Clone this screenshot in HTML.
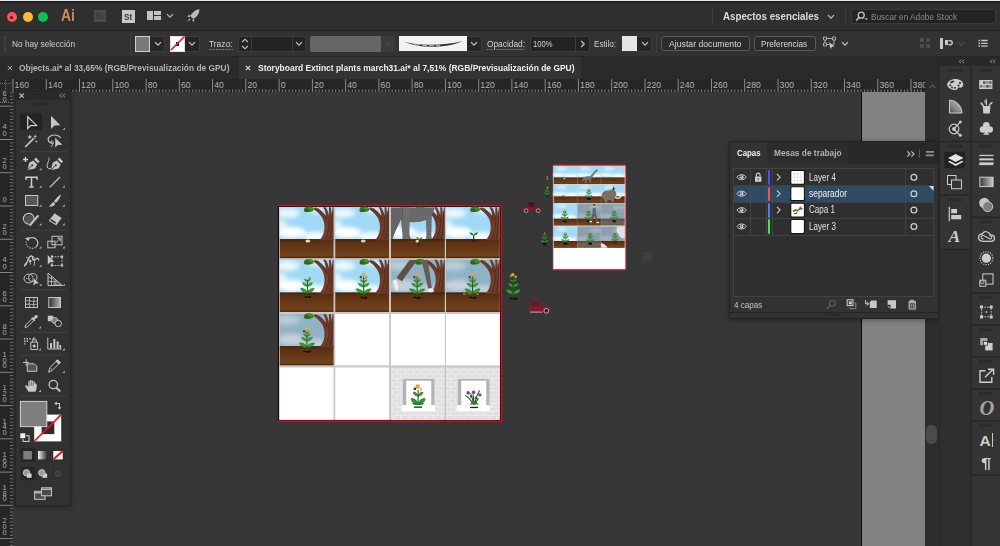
<!DOCTYPE html>
<html lang="es">
<head>
<meta charset="utf-8">
<title>Adobe Illustrator</title>
<style>
*{box-sizing:border-box;margin:0;padding:0}
html,body{width:1000px;height:546px;overflow:hidden;background:#373737}
body{position:relative;font-family:"Liberation Sans","DejaVu Sans",sans-serif;font-size:10px;color:#d6d6d6;-webkit-font-smoothing:antialiased}
.a{position:absolute}
.t{position:absolute;white-space:nowrap;line-height:1;transform-origin:0 0}
svg{position:absolute;overflow:visible}
/* ---------- top bars ---------- */
#topline{left:0;top:0;width:1000px;height:1px;background:#e4e4ec}
#topdark{left:0;top:1px;width:1000px;height:2px;background:#1f1f1f}
#titlebar{left:0;top:3px;width:1000px;height:27px;background:#2f2f2f}
#tsep{left:0;top:30px;width:1000px;height:1px;background:#232323}
#ctrlbar{left:0;top:31px;width:1000px;height:26px;background:#323232}
#csep{left:0;top:56px;width:1000px;height:1px;background:#262626}
#tabbar{left:0;top:57px;width:1000px;height:22px;background:#2a2a2a}
#tab2{left:239px;top:57px;width:342px;height:22px;background:#333333}
#hruler{left:0;top:79px;width:925px;height:13px;background:#262626}
#vruler{left:0;top:92px;width:13px;height:454px;background:#262626}
.dd{position:absolute;background:#262626;border:1px solid #3d3d3d;border-radius:2px}
.btn{position:absolute;border:1px solid #5a5a5a;border-radius:3px;background:#2b2b2b}
/* ---------- tools ---------- */
#tools{left:15px;top:90px;width:56px;height:416px;background:#313131;border:1px solid #262626;box-shadow:0 1px 5px rgba(0,0,0,.4)}
#toolshead{left:16px;top:91px;width:54px;height:9px;background:#292929}
.tsep{position:absolute;left:20px;width:46px;height:1px;background:#444}
/* ---------- right ---------- */
#grayrect{left:862px;top:92px;width:63px;height:454px;background:#828282}
#grayline{left:861px;top:92px;width:1px;height:454px;background:#0a0a0a}
#vscroll{left:925px;top:92px;width:14px;height:454px;background:#2d2d2d}
#dockbg{left:939px;top:57px;width:61px;height:489px;background:#292929}
#dock1{left:940px;top:66px;width:29.500px;height:183.500px;background:#343434}
#dock1b{left:940px;top:250px;width:29.500px;height:296px;background:#2f2f2f}
#dock2{left:971.500px;top:66px;width:28.500px;height:480px;background:#343434}
.dsep{position:absolute;height:1px;background:#2a2a2a}
/* ---------- layers ---------- */
#layers{left:729px;top:141px;width:210px;height:178px;background:#323232;border:1px solid #232323;box-shadow:0 1px 5px rgba(0,0,0,.4)}
#lhead{left:730px;top:142px;width:208px;height:22px;background:#282828}
#ltab{left:730px;top:142px;width:37px;height:23px;background:#323232}
#llist{left:733px;top:168px;width:201px;height:129px;background:#2f2f2f;border:1px solid #414141}
.lrow{position:absolute;left:734px;width:199px;height:16px;border-bottom:1px solid #3c3c3c}
</style>
</head>
<body>
<!-- base bars -->
<div class="a" id="titlebar"></div>
<div class="a" id="topline"></div>
<div class="a" id="topdark"></div>
<div class="a" id="tsep"></div>
<div class="a" id="ctrlbar"></div>
<div class="a" id="csep"></div>
<div class="a" id="tabbar"></div>
<div class="a" id="tab2"></div>
<div class="a" id="hruler"></div>
<div class="a" id="vruler"></div>
<!-- title bar -->
<div class="a" style="left:6.5px;top:12px;width:10px;height:10px;border-radius:50%;background:#f5565a"></div>
<div class="a" style="left:10px;top:15.5px;width:3px;height:3px;border-radius:50%;background:#5a1010"></div>
<div class="a" style="left:22.5px;top:12px;width:10px;height:10px;border-radius:50%;background:#fbb93e"></div>
<div class="a" style="left:38px;top:12px;width:10px;height:10px;border-radius:50%;background:#09c455"></div>
<div class="t" id="ailogo" style="left:61px;top:7px;font-size:17px;font-weight:bold;color:#c98a63;transform:scaleX(.82)">Ai</div>
<div class="a" style="left:94px;top:10px;width:12px;height:12px;background:#4a4a4a"></div>
<div class="t" style="left:95.5px;top:12px;font-size:9px;font-weight:bold;color:#383838;transform:scaleX(.85)">Br</div>
<div class="a" style="left:122px;top:10px;width:13px;height:13px;background:#c9c9c9"></div>
<div class="t" style="left:124px;top:12px;font-size:9.5px;font-weight:bold;color:#333;transform:scaleX(.85)">St</div>
<div class="a" style="left:147px;top:11px;width:6px;height:9px;background:#c2c2c2"></div>
<div class="a" style="left:154px;top:11px;width:7px;height:4px;background:#c2c2c2"></div>
<div class="a" style="left:154px;top:16px;width:7px;height:4px;background:#c2c2c2"></div>
<svg style="left:166px;top:13px" width="8" height="6" viewBox="0 0 8 6"><path d="M1 1.2 L4 4.2 L7 1.2" fill="none" stroke="#b8b8b8" stroke-width="1.2"/></svg>
<svg style="left:185px;top:8px" width="16" height="16" viewBox="0 0 16 16"><path d="M14.5 1.2 C10.5 1.6 7.2 4.2 5.4 8.2 L8.2 10.8 C12 9 14.3 5.6 14.5 1.2 Z" fill="#bdbdbd"/><path d="M5.6 6.6 L2 8.2 L4.6 9.2 Z M9.6 10.6 L8.4 14.2 L7.2 11.8 Z" fill="#bdbdbd"/><path d="M4.6 10.4 L2.2 13.6 L5.8 11.6 Z" fill="#bdbdbd"/></svg>
<div class="a" style="left:712px;top:8px;width:1px;height:17px;background:#3e3e3e"></div>
<div class="t" id="aspectos" style="left:723px;top:11.600px;font-size:10.2px;font-weight:bold;color:#dcdcdc;transform:scaleX(0.958)">Aspectos esenciales</div>
<svg style="left:827px;top:14px" width="8" height="6" viewBox="0 0 8 6"><path d="M1 1.2 L4 4.2 L7 1.2" fill="none" stroke="#c4c4c4" stroke-width="1.2"/></svg>
<div class="a" style="left:845px;top:8px;width:1px;height:17px;background:#3e3e3e"></div>
<div class="a" style="left:851px;top:9px;width:145px;height:15px;background:#232323;border:1px solid #3a3a3a;border-radius:3px"></div>
<svg style="left:855px;top:11px" width="14" height="11" viewBox="0 0 14 11"><circle cx="6.2" cy="4.2" r="3" fill="none" stroke="#c8c8c8" stroke-width="1.3"/><path d="M4 6.6 L1.2 9.6" stroke="#c8c8c8" stroke-width="1.5"/><path d="M9.6 7.2 L12.8 7.2 L11.2 9 Z" fill="#c8c8c8"/></svg>
<div class="t" id="buscar" style="left:871px;top:11.5px;font-size:9.5px;color:#8a8a8a;transform:scaleX(0.871)">Buscar en Adobe Stock</div>
<!--/TITLE-->
<!-- control bar -->
<div class="a" style="left:4px;top:36px;width:2px;height:15px;background:repeating-linear-gradient(#4a4a4a 0 1px,transparent 1px 2px)"></div>
<div class="t" id="nohay" style="left:12px;top:39px;font-size:9.5px;color:#d2d2d2;transform:scaleX(0.871)">No hay selección</div>
<div class="a" style="left:129.5px;top:34px;width:1px;height:19px;background:#3f3f3f"></div>
<div class="dd" style="left:135px;top:36px;width:30px;height:16px"></div>
<div class="a" style="left:135px;top:36px;width:15px;height:15.5px;background:#7a7a7a;border:1px solid #cfcfcf"></div>
<svg style="left:153.5px;top:41px" width="8" height="6" viewBox="0 0 8 6"><path d="M1 1.2 L4 4.2 L7 1.2" fill="none" stroke="#c8c8c8" stroke-width="1.2"/></svg>
<div class="dd" style="left:169.5px;top:36px;width:30px;height:16px"></div>
<div class="a" style="left:169.5px;top:36px;width:15px;height:15.5px;background:#fff;border:1px solid #e0e0e0"></div>
<div class="a" style="left:175.5px;top:42px;width:3.5px;height:4px;background:#222"></div>
<svg style="left:169.5px;top:36px" width="15" height="15.5" viewBox="0 0 15 15.5"><path d="M1 14 L14.5 0.5" stroke="#f01020" stroke-width="1.6"/></svg>
<svg style="left:188px;top:41px" width="8" height="6" viewBox="0 0 8 6"><path d="M1 1.2 L4 4.2 L7 1.2" fill="none" stroke="#c8c8c8" stroke-width="1.2"/></svg>
<div class="t" id="trazo" style="left:209px;top:38.5px;font-size:9.5px;color:#d2d2d2;transform:scaleX(0.880);border-bottom:1px dotted #9a9a9a;padding-bottom:1px">Trazo:</div>
<div class="dd" style="left:238px;top:35.5px;width:68px;height:16px;background:#232323"></div>
<div class="a" style="left:251px;top:36px;width:1px;height:15px;background:#3d3d3d"></div>
<div class="a" style="left:291.5px;top:36px;width:1px;height:15px;background:#3d3d3d"></div>
<svg style="left:241px;top:37.5px" width="8" height="12" viewBox="0 0 8 12"><path d="M1.2 4 L4 1.2 L6.8 4 M1.2 8 L4 10.8 L6.8 8" fill="none" stroke="#c8c8c8" stroke-width="1.1"/></svg>
<svg style="left:294.5px;top:41px" width="8" height="6" viewBox="0 0 8 6"><path d="M1 1.2 L4 4.2 L7 1.2" fill="none" stroke="#c8c8c8" stroke-width="1.2"/></svg>
<div class="a" style="left:309.5px;top:35.5px;width:71px;height:16px;background:#666;border-radius:2px 0 0 2px"></div>
<div class="a" style="left:380.5px;top:35.5px;width:14px;height:16px;background:#3b3b3b;border-radius:0 2px 2px 0"></div>
<svg style="left:383.5px;top:41px" width="8" height="6" viewBox="0 0 8 6"><path d="M1 1.2 L4 4.2 L7 1.2" fill="none" stroke="#4c4c4c" stroke-width="1.2"/></svg>
<div class="dd" style="left:398.5px;top:35.5px;width:83px;height:16px"></div>
<div class="a" style="left:399px;top:36px;width:68px;height:15px;background:#f2f2f2"></div>
<svg style="left:399px;top:36px" width="68" height="15" viewBox="0 0 68 15"><path d="M4.500 5.600 C13 8.200 22 9 32 8.800 C44 8.600 54 7.600 63.500 5 C54.500 9.200 44 10.600 32 10.800 C22 10.800 12.500 9.200 4.500 5.600 Z" fill="#2e2e2e"/><path d="M15 8.900 H21 M23.500 9.600 H28 M30 9.800 H35 M37 9.700 H41" stroke="#d8d8d8" stroke-width=".9"/></svg>
<svg style="left:470px;top:41px" width="8" height="6" viewBox="0 0 8 6"><path d="M1 1.2 L4 4.2 L7 1.2" fill="none" stroke="#c8c8c8" stroke-width="1.2"/></svg>
<div class="t" id="opac" style="left:487px;top:38.5px;font-size:9.5px;color:#d2d2d2;transform:scaleX(0.877);border-bottom:1px dotted #9a9a9a;padding-bottom:1px">Opacidad:</div>
<div class="dd" style="left:529.5px;top:35.5px;width:60px;height:16px;background:#232323"></div>
<div class="a" style="left:575px;top:36px;width:1px;height:15px;background:#3d3d3d"></div>
<div class="t" id="pct" style="left:533px;top:39px;font-size:9.5px;color:#d2d2d2;transform:scaleX(0.802)">100%</div>
<svg style="left:579.5px;top:39.5px" width="6" height="8" viewBox="0 0 6 8"><path d="M1.2 1 L4.2 4 L1.2 7" fill="none" stroke="#c8c8c8" stroke-width="1.2"/></svg>
<div class="t" id="estilo" style="left:594px;top:39px;font-size:9.5px;color:#d2d2d2;transform:scaleX(0.850)">Estilo:</div>
<div class="dd" style="left:621.5px;top:35.5px;width:30px;height:16px"></div>
<div class="a" style="left:622px;top:36px;width:15px;height:15px;background:#e6e6e6"></div>
<svg style="left:640.5px;top:41px" width="8" height="6" viewBox="0 0 8 6"><path d="M1 1.2 L4 4.2 L7 1.2" fill="none" stroke="#c8c8c8" stroke-width="1.2"/></svg>
<div class="a" style="left:656px;top:34px;width:1px;height:19px;background:#3f3f3f"></div>
<div class="btn" style="left:661px;top:36px;width:89px;height:15px"></div>
<div class="t" id="ajustar" style="left:669px;top:39px;font-size:9.5px;color:#dadada;transform:scaleX(0.914)">Ajustar documento</div>
<div class="btn" style="left:754px;top:36px;width:62px;height:15px"></div>
<div class="t" id="pref" style="left:761px;top:39px;font-size:9.5px;color:#dadada;transform:scaleX(0.866)">Preferencias</div>
<svg style="left:822px;top:36px" width="16" height="15" viewBox="0 0 16 15"><path d="M3 2.500 H12 V8.500 H3 Z" fill="none" stroke="#b4b4b4" stroke-width="1"/><path d="M1.500 1 h3 v3 h-3 z M10.500 1 h3 v3 h-3 z M1.500 7 h3 v3 h-3 z" fill="#323232" stroke="#b4b4b4" stroke-width=".9"/><path d="M6.500 5.500 L13 10.800 L10 11 L8.600 13.800 Z" fill="#d0d0d0" stroke="#323232" stroke-width=".5"/></svg>
<svg style="left:841px;top:41px" width="8" height="6" viewBox="0 0 8 6"><path d="M1 1.2 L4 4.2 L7 1.2" fill="none" stroke="#c8c8c8" stroke-width="1.2"/></svg>
<svg style="left:919px;top:37px" width="12" height="12" viewBox="0 0 12 12"><path d="M1 1 h4 v4 h-4 z M7 1 h4 v4 h-4 z M1 7 h4 v4 h-4 z M7 7 h4 v4 h-4 z" fill="#4c4c4c"/></svg>
<svg style="left:939px;top:37px" width="16" height="13" viewBox="0 0 16 13"><path d="M1 1 h3 v11 h-3 z" fill="#c6c6c6"/><path d="M6 3 h3 v5 h-3 z" fill="#c6c6c6"/><path d="M9.5 3.8 H11.2 A2 2 0 0 1 11.2 7.8 H9.5" fill="none" stroke="#c6c6c6" stroke-width="1.4"/></svg>
<svg style="left:957px;top:41px" width="8" height="6" viewBox="0 0 8 6"><path d="M1 1.2 L4 4.2 L7 1.2" fill="none" stroke="#4e4e4e" stroke-width="1.2"/></svg>
<svg style="left:977.500px;top:39px" width="11" height="9" viewBox="0 0 11 9"><path d="M.5 1.500 h1.600 M.5 4.300 h1.600 M.5 7.100 h1.600" stroke="#c6c6c6" stroke-width="1.500"/><path d="M3.200 1.500 h6.400 M3.200 4.300 h6.400 M3.200 7.100 h6.400" stroke="#c6c6c6" stroke-width="1.300"/></svg>
<!--/CTRL-->
<!-- tabs -->
<svg style="left:6.5px;top:65px" width="6" height="6" viewBox="0 0 6 6"><path d="M.8 .8 L5.2 5.200 M5.2 .8 L.8 5.200" stroke="#a8a8a8" stroke-width="1"/></svg>
<div class="t" id="tab1t" style="left:19px;top:63.6px;font-size:9.3px;font-weight:bold;color:#b4b4b4;transform:scaleX(.901)">Objects.ai* al 33,65% (RGB/Previsualización de GPU)</div>
<svg style="left:245px;top:65px" width="6" height="6" viewBox="0 0 6 6"><path d="M.8 .8 L5.2 5.200 M5.2 .8 L.8 5.200" stroke="#dcdcdc" stroke-width="1.100"/></svg>
<div class="t" id="tab2t" style="left:257.5px;top:63.6px;font-size:9.3px;font-weight:bold;color:#f0f0f0;transform:scaleX(.909)">Storyboard Extinct plants march31.ai* al 7,51% (RGB/Previsualización de GPU)</div>
<!-- horizontal ruler -->
<svg style="left:0;top:79px;overflow:hidden" width="925" height="13" viewBox="0 0 925 13"><path d="M0 0 H13 V13 H0 Z" fill="#2a2a2a"/><path d="M5.5 1 V10 M0 4.500 H12" stroke="#707070" stroke-width="1" stroke-dasharray="1 1"/><path d="M13.0 0 V13 M46.3 0 V13 M79.5 0 V13 M112.8 0 V13 M146.1 0 V13 M179.3 0 V13 M212.6 0 V13 M245.8 0 V13 M279.1 0 V13 M312.4 0 V13 M345.6 0 V13 M378.9 0 V13 M412.1 0 V13 M445.4 0 V13 M478.7 0 V13 M511.9 0 V13 M545.2 0 V13 M578.4 0 V13 M611.7 0 V13 M645.0 0 V13 M678.2 0 V13 M711.5 0 V13 M744.7 0 V13 M778.0 0 V13 M811.3 0 V13 M844.5 0 V13 M877.8 0 V13 M911.0 0 V13" stroke="#8c8c8c" stroke-width="1"/><path d="M16.3 10.5 V13 M19.7 10.5 V13 M23.0 10.5 V13 M26.3 10.5 V13 M29.7 10.5 V13 M33.0 10.5 V13 M36.3 10.5 V13 M39.6 10.5 V13 M43.0 10.5 V13 M49.6 10.5 V13 M52.9 10.5 V13 M56.3 10.5 V13 M59.6 10.5 V13 M62.9 10.5 V13 M66.2 10.5 V13 M69.6 10.5 V13 M72.9 10.5 V13 M76.2 10.5 V13 M82.9 10.5 V13 M86.2 10.5 V13 M89.5 10.5 V13 M92.8 10.5 V13 M96.2 10.5 V13 M99.5 10.5 V13 M102.8 10.5 V13 M106.1 10.5 V13 M109.5 10.5 V13 M116.1 10.5 V13 M119.5 10.5 V13 M122.8 10.5 V13 M126.1 10.5 V13 M129.4 10.5 V13 M132.8 10.5 V13 M136.1 10.5 V13 M139.4 10.5 V13 M142.7 10.5 V13 M149.4 10.5 V13 M152.7 10.5 V13 M156.0 10.5 V13 M159.4 10.5 V13 M162.7 10.5 V13 M166.0 10.5 V13 M169.3 10.5 V13 M172.7 10.5 V13 M176.0 10.5 V13 M182.6 10.5 V13 M186.0 10.5 V13 M189.3 10.5 V13 M192.6 10.5 V13 M196.0 10.5 V13 M199.3 10.5 V13 M202.6 10.5 V13 M205.9 10.5 V13 M209.3 10.5 V13 M215.9 10.5 V13 M219.2 10.5 V13 M222.6 10.5 V13 M225.9 10.5 V13 M229.2 10.5 V13 M232.5 10.5 V13 M235.9 10.5 V13 M239.2 10.5 V13 M242.5 10.5 V13 M249.2 10.5 V13 M252.5 10.5 V13 M255.8 10.5 V13 M259.1 10.5 V13 M262.5 10.5 V13 M265.8 10.5 V13 M269.1 10.5 V13 M272.4 10.5 V13 M275.8 10.5 V13 M282.4 10.5 V13 M285.8 10.5 V13 M289.1 10.5 V13 M292.4 10.5 V13 M295.7 10.5 V13 M299.1 10.5 V13 M302.4 10.5 V13 M305.7 10.5 V13 M309.0 10.5 V13 M315.7 10.5 V13 M319.0 10.5 V13 M322.3 10.5 V13 M325.7 10.5 V13 M329.0 10.5 V13 M332.3 10.5 V13 M335.6 10.5 V13 M339.0 10.5 V13 M342.3 10.5 V13 M348.9 10.5 V13 M352.3 10.5 V13 M355.6 10.5 V13 M358.9 10.5 V13 M362.2 10.5 V13 M365.6 10.5 V13 M368.9 10.5 V13 M372.2 10.5 V13 M375.6 10.5 V13 M382.2 10.5 V13 M385.5 10.5 V13 M388.9 10.5 V13 M392.2 10.5 V13 M395.5 10.5 V13 M398.8 10.5 V13 M402.2 10.5 V13 M405.5 10.5 V13 M408.8 10.5 V13 M415.5 10.5 V13 M418.8 10.5 V13 M422.1 10.5 V13 M425.4 10.5 V13 M428.8 10.5 V13 M432.1 10.5 V13 M435.4 10.5 V13 M438.7 10.5 V13 M442.1 10.5 V13 M448.7 10.5 V13 M452.1 10.5 V13 M455.4 10.5 V13 M458.7 10.5 V13 M462.0 10.5 V13 M465.4 10.5 V13 M468.7 10.5 V13 M472.0 10.5 V13 M475.3 10.5 V13 M482.0 10.5 V13 M485.3 10.5 V13 M488.6 10.5 V13 M492.0 10.5 V13 M495.3 10.5 V13 M498.6 10.5 V13 M501.9 10.5 V13 M505.3 10.5 V13 M508.6 10.5 V13 M515.2 10.5 V13 M518.6 10.5 V13 M521.9 10.5 V13 M525.2 10.5 V13 M528.6 10.5 V13 M531.9 10.5 V13 M535.2 10.5 V13 M538.5 10.5 V13 M541.9 10.5 V13 M548.5 10.5 V13 M551.8 10.5 V13 M555.2 10.5 V13 M558.5 10.5 V13 M561.8 10.5 V13 M565.1 10.5 V13 M568.5 10.5 V13 M571.8 10.5 V13 M575.1 10.5 V13 M581.8 10.5 V13 M585.1 10.5 V13 M588.4 10.5 V13 M591.7 10.5 V13 M595.1 10.5 V13 M598.4 10.5 V13 M601.7 10.5 V13 M605.0 10.5 V13 M608.4 10.5 V13 M615.0 10.5 V13 M618.4 10.5 V13 M621.7 10.5 V13 M625.0 10.5 V13 M628.3 10.5 V13 M631.7 10.5 V13 M635.0 10.5 V13 M638.3 10.5 V13 M641.6 10.5 V13 M648.3 10.5 V13 M651.6 10.5 V13 M654.9 10.5 V13 M658.3 10.5 V13 M661.6 10.5 V13 M664.9 10.5 V13 M668.2 10.5 V13 M671.6 10.5 V13 M674.9 10.5 V13 M681.5 10.5 V13 M684.9 10.5 V13 M688.2 10.5 V13 M691.5 10.5 V13 M694.9 10.5 V13 M698.2 10.5 V13 M701.5 10.5 V13 M704.8 10.5 V13 M708.2 10.5 V13 M714.8 10.5 V13 M718.1 10.5 V13 M721.5 10.5 V13 M724.8 10.5 V13 M728.1 10.5 V13 M731.4 10.5 V13 M734.8 10.5 V13 M738.1 10.5 V13 M741.4 10.5 V13 M748.1 10.5 V13 M751.4 10.5 V13 M754.7 10.5 V13 M758.0 10.5 V13 M761.4 10.5 V13 M764.7 10.5 V13 M768.0 10.5 V13 M771.3 10.5 V13 M774.7 10.5 V13 M781.3 10.5 V13 M784.7 10.5 V13 M788.0 10.5 V13 M791.3 10.5 V13 M794.6 10.5 V13 M798.0 10.5 V13 M801.3 10.5 V13 M804.6 10.5 V13 M807.9 10.5 V13 M814.6 10.5 V13 M817.9 10.5 V13 M821.2 10.5 V13 M824.6 10.5 V13 M827.9 10.5 V13 M831.2 10.5 V13 M834.5 10.5 V13 M837.9 10.5 V13 M841.2 10.5 V13 M847.8 10.5 V13 M851.2 10.5 V13 M854.5 10.5 V13 M857.8 10.5 V13 M861.1 10.5 V13 M864.5 10.5 V13 M867.8 10.5 V13 M871.1 10.5 V13 M874.5 10.5 V13 M881.1 10.5 V13 M884.4 10.5 V13 M887.8 10.5 V13 M891.1 10.5 V13 M894.4 10.5 V13 M897.7 10.5 V13 M901.1 10.5 V13 M904.4 10.5 V13 M907.7 10.5 V13 M914.4 10.5 V13 M917.7 10.5 V13 M921.0 10.5 V13" stroke="#7c7c7c" stroke-width="1"/><g font-family="Liberation Sans, DejaVu Sans, sans-serif" font-size="8.6" fill="#b4b4b4" letter-spacing="0.1"><text x="14.6" y="8.8">160</text><text x="47.9" y="8.8">140</text><text x="81.1" y="8.8">120</text><text x="114.4" y="8.8">100</text><text x="147.7" y="8.8">80</text><text x="180.9" y="8.8">60</text><text x="214.2" y="8.8">40</text><text x="247.4" y="8.8">20</text><text x="280.7" y="8.8">0</text><text x="314.0" y="8.8">20</text><text x="347.2" y="8.8">40</text><text x="380.5" y="8.8">60</text><text x="413.7" y="8.8">80</text><text x="447.0" y="8.8">100</text><text x="480.3" y="8.8">120</text><text x="513.5" y="8.8">140</text><text x="546.8" y="8.8">160</text><text x="580.0" y="8.8">180</text><text x="613.3" y="8.8">200</text><text x="646.6" y="8.8">220</text><text x="679.8" y="8.8">240</text><text x="713.1" y="8.8">260</text><text x="746.3" y="8.8">280</text><text x="779.6" y="8.8">300</text><text x="812.9" y="8.8">320</text><text x="846.1" y="8.8">340</text><text x="879.4" y="8.8">360</text><text x="912.6" y="8.8">380</text></g></svg>
<div class="a" style="left:925px;top:79px;width:14px;height:13px;background:#2d2d2d"></div><svg style="left:928.5px;top:84px" width="7" height="5" viewBox="0 0 7 5"><path d="M.6 4.2 L3.5 1.2 L6.4 4.2" fill="none" stroke="#5e5e5e" stroke-width="1.1"/></svg>
<!--/TABS-->
<!-- vertical ruler -->
<svg style="left:0;top:92px" width="13" height="454" viewBox="0 92 13 454">
<path d="M0 106.2 H13 M0 139.5 H13 M0 172.7 H13 M0 206.0 H13 M0 239.3 H13 M0 272.5 H13 M0 305.8 H13 M0 339.0 H13 M0 372.3 H13 M0 405.6 H13 M0 438.8 H13 M0 472.1 H13 M0 505.3 H13 M0 538.6 H13" stroke="#848484" stroke-width="1"/>
<path d="M10 92.9 H13 M10 96.2 H13 M10 99.6 H13 M10 102.9 H13 M10 109.5 H13 M10 112.9 H13 M10 116.2 H13 M10 119.5 H13 M10 122.8 H13 M10 126.2 H13 M10 129.5 H13 M10 132.8 H13 M10 136.2 H13 M10 142.8 H13 M10 146.1 H13 M10 149.5 H13 M10 152.8 H13 M10 156.1 H13 M10 159.4 H13 M10 162.8 H13 M10 166.1 H13 M10 169.4 H13 M10 176.1 H13 M10 179.4 H13 M10 182.7 H13 M10 186.0 H13 M10 189.4 H13 M10 192.7 H13 M10 196.0 H13 M10 199.3 H13 M10 202.7 H13 M10 209.3 H13 M10 212.7 H13 M10 216.0 H13 M10 219.3 H13 M10 222.6 H13 M10 226.0 H13 M10 229.3 H13 M10 232.6 H13 M10 235.9 H13 M10 242.6 H13 M10 245.9 H13 M10 249.2 H13 M10 252.6 H13 M10 255.9 H13 M10 259.2 H13 M10 262.5 H13 M10 265.9 H13 M10 269.2 H13 M10 275.8 H13 M10 279.2 H13 M10 282.5 H13 M10 285.8 H13 M10 289.1 H13 M10 292.5 H13 M10 295.8 H13 M10 299.1 H13 M10 302.5 H13 M10 309.1 H13 M10 312.4 H13 M10 315.8 H13 M10 319.1 H13 M10 322.4 H13 M10 325.7 H13 M10 329.1 H13 M10 332.4 H13 M10 335.7 H13 M10 342.4 H13 M10 345.7 H13 M10 349.0 H13 M10 352.3 H13 M10 355.7 H13 M10 359.0 H13 M10 362.3 H13 M10 365.6 H13 M10 369.0 H13 M10 375.6 H13 M10 379.0 H13 M10 382.3 H13 M10 385.6 H13 M10 388.9 H13 M10 392.3 H13 M10 395.6 H13 M10 398.9 H13 M10 402.2 H13 M10 408.9 H13 M10 412.2 H13 M10 415.5 H13 M10 418.9 H13 M10 422.2 H13 M10 425.5 H13 M10 428.8 H13 M10 432.2 H13 M10 435.5 H13 M10 442.1 H13 M10 445.5 H13 M10 448.8 H13 M10 452.1 H13 M10 455.4 H13 M10 458.8 H13 M10 462.1 H13 M10 465.4 H13 M10 468.8 H13 M10 475.4 H13 M10 478.7 H13 M10 482.1 H13 M10 485.4 H13 M10 488.7 H13 M10 492.0 H13 M10 495.4 H13 M10 498.7 H13 M10 502.0 H13 M10 508.7 H13 M10 512.0 H13 M10 515.3 H13 M10 518.6 H13 M10 522.0 H13 M10 525.3 H13 M10 528.6 H13 M10 531.9 H13 M10 535.3 H13 M10 541.9 H13 M10 545.3 H13" stroke="#767676" stroke-width="1"/>
<path d="M0 102.300 H10" stroke="#8a8a8a" stroke-width="1" stroke-dasharray="1 1"/>
<g font-family="Liberation Sans, DejaVu Sans, sans-serif" font-size="7.4" fill="#acacac" text-anchor="middle"><text x="4.600" y="102.2">0</text><text x="4.600" y="96.0">6</text><text x="4.600" y="135.5">0</text><text x="4.600" y="129.3">4</text><text x="4.600" y="168.7">0</text><text x="4.600" y="162.5">2</text><text x="4.600" y="202.0">0</text><text x="4.600" y="235.3">0</text><text x="4.600" y="229.1">2</text><text x="4.600" y="268.5">0</text><text x="4.600" y="262.3">4</text><text x="4.600" y="301.8">0</text><text x="4.600" y="295.6">6</text><text x="4.600" y="335.0">0</text><text x="4.600" y="328.8">8</text><text x="4.600" y="368.3">0</text><text x="4.600" y="362.7">0</text><text x="4.600" y="357.1">1</text><text x="4.600" y="401.6">0</text><text x="4.600" y="396.0">2</text><text x="4.600" y="390.4">1</text><text x="4.600" y="434.8">0</text><text x="4.600" y="429.2">4</text><text x="4.600" y="423.6">1</text><text x="4.600" y="468.1">0</text><text x="4.600" y="462.5">6</text><text x="4.600" y="456.9">1</text><text x="4.600" y="501.3">0</text><text x="4.600" y="495.7">8</text><text x="4.600" y="490.1">1</text><text x="4.600" y="534.6">0</text><text x="4.600" y="529.0">0</text><text x="4.600" y="523.4">2</text></g></svg>
<!--/RULERS-->
<!--CANVAS_S--><!-- canvas artwork -->
<svg style="left:0;top:0" width="1000" height="546" viewBox="0 0 1000 546">
<defs>
<linearGradient id="gnd" x1="0" y1="0" x2="0" y2="1"><stop offset="0" stop-color="#3e200c"/><stop offset=".14" stop-color="#5a2f13"/><stop offset=".55" stop-color="#693a18"/><stop offset=".88" stop-color="#70421c"/><stop offset="1" stop-color="#46240c"/></linearGradient>
<linearGradient id="gndg" x1="0" y1="0" x2="0" y2="1"><stop offset="0" stop-color="#5a4a40"/><stop offset=".5" stop-color="#786458"/><stop offset="1" stop-color="#6a574c"/></linearGradient>
<filter id="bl" x="-20%" y="-20%" width="140%" height="140%"><feGaussianBlur stdDeviation="2.2"/></filter>
<filter id="bs" x="-20%" y="-20%" width="140%" height="140%"><feGaussianBlur stdDeviation="1"/></filter>
<clipPath id="cc"><rect x="0" y="0" width="54" height="52"/></clipPath>
<clipPath id="c2"><rect x="0" y="0" width="24" height="22"/></clipPath>
<!-- big scene 54x52 : sky -->
<g id="sky" clip-path="url(#cc)">
 <rect width="54" height="34" fill="#a0d8f5"/>
 <g filter="url(#bl)" fill="#fff"><ellipse cx="8" cy="6" rx="12" ry="5" opacity=".8"/><ellipse cx="12" cy="26" rx="14" ry="6"/><ellipse cx="36" cy="30" rx="12" ry="5" opacity=".9"/><ellipse cx="38" cy="4" rx="8" ry="3" opacity=".6"/><ellipse cx="2" cy="18" rx="5" ry="5" opacity=".7"/></g>
</g>
<g id="skyg" clip-path="url(#cc)">
 <rect width="54" height="34" fill="#8fb3c6"/>
 <g filter="url(#bl)" fill="#c6d2d8"><ellipse cx="8" cy="6" rx="12" ry="5" opacity=".8"/><ellipse cx="12" cy="26" rx="14" ry="6"/><ellipse cx="36" cy="30" rx="12" ry="5" opacity=".9"/></g>
</g>
<g id="tree">
 <ellipse cx="29.200" cy="2" rx="4.800" ry="2.700" fill="#3a7a22"/><ellipse cx="27.400" cy="3.200" rx="3" ry="1.600" fill="#2d661a"/><ellipse cx="31" cy="1.200" rx="2.400" ry="1.200" fill="#4a8f2a"/>
 <path d="M39.500 34 C42.500 31 44.300 27 44.800 23 C45.300 18.500 44.500 14 42.500 10.500 C40.300 7 37 3.800 33.800 1.800 L35.500 0 C39.500 1.800 43.500 5 46.200 9 C46.200 5.500 45.200 2.500 43.600 0 L46 0 C47.600 2.200 48.800 5 49.400 8.500 C49.600 5 49.600 2.500 49.400 0 L51.200 0 C51.700 2.500 51.900 5.500 51.900 8.500 C52.500 6 52.900 3 53.100 0 L54 0 L54 34 Z" fill="#6b3a28"/>
 <path d="M49.500 10 C50.500 17 49 26 45.500 33 M52.500 4 C53 12 52.500 24 50.500 33 M38 1 C42 4 46 8 47.500 13" fill="none" stroke="#4b2418" stroke-width=".9" opacity=".75"/>
 <path d="M47.800 16 C48 22 46.500 28 44 33" fill="none" stroke="#8a5340" stroke-width=".8" opacity=".6"/>
</g>
<g id="ground"><rect y="32.500" width="54" height="19.500" fill="url(#gnd)"/></g>
<!-- plant, origin at base centre; approx 14 wide 21 tall -->
<g id="plantA">
 <path d="M-4 4.200 l2.500 -1 l1.500 1.200 l2 -1.400 l2.200 1.600 l-2.500 .8 l-2.200 -.4 z" fill="#140c06"/>
 <path d="M0 2 V-13" stroke="#2a5a1c" stroke-width="1"/>
 <path d="M0 0 C-2.500 .5 -6 -1 -6.800 -4.500 C-3.500 -4.500 -.8 -3 0 0 Z M0 0 C2.500 .5 6 -1 6.800 -4.500 C3.500 -4.500 .8 -3 0 0 Z" fill="#35a22e" stroke="#1c5a1a" stroke-width=".5"/>
 <path d="M0 -6.500 C-2 -6.200 -4.400 -7.500 -5 -10 C-2.500 -10 -.6 -9 0 -6.500 Z M0 -6.500 C2 -6.200 4.400 -7.500 5 -10 C2.500 -10 .6 -9 0 -6.500 Z" fill="#3cab33" stroke="#1c5a1a" stroke-width=".45"/>
 <path d="M0 -11 C-1.200 -11 -2.800 -12 -3 -13.600 C-1.500 -13.600 -.3 -12.800 0 -11 Z M0 -11 C1.200 -11 2.800 -12 3 -13.600 C1.500 -13.600 .3 -12.800 0 -11 Z" fill="#3cab33" stroke="#1c5a1a" stroke-width=".4"/>
</g>
<g id="plantS"><!-- small bud plant -->
 <use href="#plantA"/>
 <circle cx="2" cy="-14.200" r="1" fill="#c98a1e"/><circle cx="2.300" cy="-14.800" r=".6" fill="#3a2a10"/>
</g>
<g id="plantF"><!-- flowering plant -->
 <use href="#plantA" transform="scale(1.1 1)"/>
 <path d="M0 -13 V-18 M0 -14 L-2.800 -16 M0 -14.500 L2.800 -15.500" stroke="#2a5a1c" stroke-width=".7"/>
 <circle cx="0" cy="-18.800" r="1.700" fill="#dba03c"/><circle cx="-2.900" cy="-16.300" r="1.200" fill="#5a4a20"/><circle cx="3" cy="-16" r="1.400" fill="#dda23e"/><circle cx="0" cy="-19.300" r=".7" fill="#eec060"/>
</g>
<g id="plantG"><use href="#plantA"/><path d="M0 -13 V-16" stroke="#2a5a1c" stroke-width=".8"/><circle cx="0" cy="-16.500" r="1.500" fill="#c98f2c"/><circle cx="-2" cy="-14.500" r="1" fill="#3a7a22"/><circle cx="2" cy="-14.500" r="1" fill="#6a5a20"/></g>
<!-- small scene 24x22 -->
<g id="ssky" clip-path="url(#c2)"><rect width="24" height="13" fill="#a6dbf6"/><g filter="url(#bs)" fill="#fff"><ellipse cx="5" cy="3" rx="6" ry="2.200" opacity=".8"/><ellipse cx="7" cy="10" rx="7" ry="2.600"/><ellipse cx="18" cy="9" rx="6" ry="2.400" opacity=".9"/></g></g>
<g id="sskyg" clip-path="url(#c2)"><rect width="24" height="16" fill="#8c9fae"/><g filter="url(#bs)" fill="#aab6c0"><ellipse cx="7" cy="10" rx="7" ry="2.600"/><ellipse cx="18" cy="5" rx="6" ry="2.400" opacity=".9"/></g></g>
<g id="car">
 <path d="M1 6.500 C1 5 3 4.600 5.500 4.400 L6.500 1 H13.500 L14 4.400 C17 4.600 19.500 5.200 20 7.200 L19.600 8 H1.500 Z" fill="#8e1428"/>
 <path d="M7.300 1.800 H12.800 L13 4.200 H6.700 Z" fill="#3a1a20"/>
 <path d="M6.400 .8 H13.800" stroke="#2a1014" stroke-width="1"/>
 <circle cx="4.600" cy="8.200" r="1.900" fill="#2a2224" stroke="#d8d0d0" stroke-width=".7"/><circle cx="16.600" cy="8.200" r="1.900" fill="#2a2224" stroke="#d8d0d0" stroke-width=".7"/>
</g>
</defs>
<g id="ab1">
<rect x="277.9" y="204.900" width="224.200" height="216.900" fill="#d0101e"/>
<rect x="277.9" y="206" width="222.800" height="214.400" fill="#160808"/>
<rect x="279" y="206.900" width="221" height="212.900" fill="#c9c9c9"/>
<g transform="translate(279.75 207.25) scale(0.9963 0.9788)"><use href="#sky"/><use href="#ground"/><use href="#tree"/><ellipse cx="28.200" cy="34.500" rx="2.500" ry="1.600" fill="#e8d2b4"/></g>
<g transform="translate(335.25 207.25) scale(0.9963 0.9788)"><use href="#sky"/><use href="#ground"/><use href="#tree"/><ellipse cx="28.200" cy="34.500" rx="2.500" ry="1.600" fill="#e8d2b4"/><path d="M30 34 l1 3" stroke="#555" stroke-width=".8"/></g>
<g transform="translate(391.00 207.25) scale(0.9963 0.9788)"><use href="#sky"/><use href="#tree"/><g clip-path="url(#cc)"><path d="M0 0 H44 C43 6 40 11 35 13 C28 16 18 16 10 13 L10 0 Z" fill="#696969"/><path d="M9 0 H19 L18.500 26 C18.500 29 19.500 31 20.500 33.500 H11 C12 30 11.500 27 11 24 Z" fill="#6e6e6e"/><path d="M0 0 H10 V12 C8 18 4 24 1.500 33 L0 34 Z" fill="#646464"/><path d="M35 10 L41 8 L40.500 28 C40.500 30 41 32 42 33.500 H34.500 C35.500 31 35.500 28 35.500 26 Z" fill="#6e6e6e"/><path d="M11 0 C12 6 11.500 10 10 13" fill="none" stroke="#4a4a4a" stroke-width=".8"/></g><use href="#ground"/><ellipse cx="26.500" cy="34.800" rx="1.800" ry="1.500" fill="#e8d2b4"/><path d="M28 39.500 L28.500 33" stroke="#222" stroke-width=".9"/><path d="M28.500 33 C27 32.800 25.500 31.800 25.200 30.300 C27 30.300 28.200 31.400 28.500 33 Z M28.500 33 C30 32.800 31.200 32 31.600 30.800 C30 30.600 28.800 31.600 28.500 33 Z" fill="#2f8a2a"/></g>
<g transform="translate(446.00 207.25) scale(0.9963 0.9788)"><use href="#sky"/><use href="#ground"/><use href="#tree"/><path d="M27.800 34.500 L27.800 28.500" stroke="#1a1a1a" stroke-width="1.100"/><path d="M27.800 28.800 C25.800 28.800 24 27.600 23.600 25.800 C26 25.600 27.500 26.800 27.800 28.800 Z M27.800 28.800 C29.800 28.800 31.600 27.600 32 25.800 C29.600 25.600 28.100 26.800 27.800 28.800 Z" fill="#237a22"/><ellipse cx="27.800" cy="34.500" rx="1.600" ry=".8" fill="#1a100a"/></g>
<g transform="translate(279.75 259.75) scale(0.9963 1.0038)"><use href="#sky"/><use href="#ground"/><use href="#tree"/><use href="#plantS" transform="translate(27.800 32.800)"/></g>
<g transform="translate(335.25 259.75) scale(0.9963 1.0038)"><use href="#sky"/><use href="#ground"/><use href="#tree"/><use href="#plantF" transform="translate(28.500 33.500)"/></g>
<g transform="translate(391.00 259.75) scale(0.9963 1.0038)"><use href="#skyg"/><use href="#tree"/><g clip-path="url(#cc)"><path d="M19 0 H26.500 L11 21.500 L5.500 18 Z" fill="#5f5048"/><path d="M30.500 0 H37 L41 28.500 L37.500 29.500 Z" fill="#6b5b52"/><path d="M1.200 21 L5.800 19.500 L7.800 27.500 L6.800 31.500 L4.500 30.500 Z" fill="#efefef" stroke="#bbb" stroke-width=".4"/><path d="M36.800 29 L41.500 28.200 L43 31 L41 34.200 L36.800 32.500 Z" fill="#efefef" stroke="#bbb" stroke-width=".4"/></g><use href="#ground"/><use href="#plantF" transform="translate(26.200 33.500)"/></g>
<g transform="translate(446.00 259.75) scale(0.9963 1.0038)"><use href="#skyg"/><use href="#ground"/><use href="#tree"/><path d="M17 34 h3 M22 33.800 h3 M30 34 h3" stroke="#c8a040" stroke-width="1"/><use href="#plantF" transform="translate(26.700 33.500)"/></g>
<g transform="translate(279.75 314.00) scale(0.9963 0.9865)"><use href="#skyg"/><use href="#ground"/><use href="#tree"/><use href="#plantF" transform="translate(27.300 33.800)"/></g>
<rect x="335.25" y="314.00" width="53.80" height="51.30" fill="#fff"/>
<rect x="391.00" y="314.00" width="53.80" height="51.30" fill="#fff"/>
<rect x="446.00" y="314.00" width="53.80" height="51.30" fill="#fff"/>
<rect x="279.75" y="367.50" width="53.80" height="52.20" fill="#fff"/>
<rect x="335.25" y="367.50" width="53.80" height="52.20" fill="#fff"/>
<g transform="translate(391.00 367.50) scale(0.9963 1.0038)"><g clip-path="url(#cc)"><rect width="54" height="52" fill="#e0e0e0"/><path d="M0 2.6 H54 M0 6.7 H54 M0 10.8 H54 M0 14.9 H54 M0 19.0 H54 M0 23.1 H54 M0 27.2 H54 M0 31.3 H54 M0 35.4 H54 M0 39.5 H54 M0 43.6 H54 M0 47.7 H54 M0 51.8 H54" stroke="#efefef" stroke-width=".8"/><path d="M1.5 -1.5 v4.100 M9.7 -1.5 v4.100 M17.9 -1.5 v4.100 M26.1 -1.5 v4.100 M34.3 -1.5 v4.100 M42.5 -1.5 v4.100 M50.7 -1.5 v4.100 M5.6 2.6 v4.100 M13.8 2.6 v4.100 M22.0 2.6 v4.100 M30.2 2.6 v4.100 M38.4 2.6 v4.100 M46.6 2.6 v4.100 M54.8 2.6 v4.100 M1.5 6.7 v4.100 M9.7 6.7 v4.100 M17.9 6.7 v4.100 M26.1 6.7 v4.100 M34.3 6.7 v4.100 M42.5 6.7 v4.100 M50.7 6.7 v4.100 M5.6 10.8 v4.100 M13.8 10.8 v4.100 M22.0 10.8 v4.100 M30.2 10.8 v4.100 M38.4 10.8 v4.100 M46.6 10.8 v4.100 M54.8 10.8 v4.100 M1.5 14.9 v4.100 M9.7 14.9 v4.100 M17.9 14.9 v4.100 M26.1 14.9 v4.100 M34.3 14.9 v4.100 M42.5 14.9 v4.100 M50.7 14.9 v4.100 M5.6 19.0 v4.100 M13.8 19.0 v4.100 M22.0 19.0 v4.100 M30.2 19.0 v4.100 M38.4 19.0 v4.100 M46.6 19.0 v4.100 M54.8 19.0 v4.100 M1.5 23.1 v4.100 M9.7 23.1 v4.100 M17.9 23.1 v4.100 M26.1 23.1 v4.100 M34.3 23.1 v4.100 M42.5 23.1 v4.100 M50.7 23.1 v4.100 M5.6 27.2 v4.100 M13.8 27.2 v4.100 M22.0 27.2 v4.100 M30.2 27.2 v4.100 M38.4 27.2 v4.100 M46.6 27.2 v4.100 M54.8 27.2 v4.100 M1.5 31.3 v4.100 M9.7 31.3 v4.100 M17.9 31.3 v4.100 M26.1 31.3 v4.100 M34.3 31.3 v4.100 M42.5 31.3 v4.100 M50.7 31.3 v4.100 M5.6 35.4 v4.100 M13.8 35.4 v4.100 M22.0 35.4 v4.100 M30.2 35.4 v4.100 M38.4 35.4 v4.100 M46.6 35.4 v4.100 M54.8 35.4 v4.100 M1.5 39.5 v4.100 M9.7 39.5 v4.100 M17.9 39.5 v4.100 M26.1 39.5 v4.100 M34.3 39.5 v4.100 M42.5 39.5 v4.100 M50.7 39.5 v4.100 M5.6 43.6 v4.100 M13.8 43.6 v4.100 M22.0 43.6 v4.100 M30.2 43.6 v4.100 M38.4 43.6 v4.100 M46.6 43.6 v4.100 M54.8 43.6 v4.100 M1.5 47.7 v4.100 M9.7 47.7 v4.100 M17.9 47.7 v4.100 M26.1 47.7 v4.100 M34.3 47.7 v4.100 M42.5 47.7 v4.100 M50.7 47.7 v4.100 M5.6 51.8 v4.100 M13.8 51.8 v4.100 M22.0 51.8 v4.100 M30.2 51.8 v4.100 M38.4 51.8 v4.100 M46.6 51.8 v4.100 M54.8 51.8 v4.100" stroke="#efefef" stroke-width=".8"/></g><rect x="11.800" y="11.300" width="31.800" height="26.300" fill="#b4b4b4"/><rect x="15.300" y="13.200" width="25.100" height="24.400" fill="#fff"/><rect x="10.800" y="37.500" width="33.400" height="6" fill="#fff"/><g transform="translate(27.200 36.500)"><path d="M-4 3 h8" stroke="#222" stroke-width="1.300"/><path d="M0 0 C-3 .5 -6.500 -1.500 -7 -5.500 C-3.500 -5.500 -.8 -3.500 0 0 Z M0 0 C3 .5 6.500 -1.500 7 -5.500 C3.500 -5.500 .8 -3.500 0 0 Z" fill="#2f9a2c" stroke="#145014" stroke-width=".6"/><path d="M0 -2 V-14" stroke="#1c4a18" stroke-width="1"/><path d="M0 -8 C-2.500 -7.800 -4.500 -9.500 -5 -12 C-2.500 -12 -.6 -10.800 0 -8 Z M0 -8 C2.500 -7.800 4.500 -9.500 5 -12 C2.500 -12 .6 -10.800 0 -8 Z" fill="#33a030" stroke="#145014" stroke-width=".5"/><ellipse cx="0" cy="-.600" rx="6" ry="1.600" fill="#2b8a28"/><circle cx="-.5" cy="-17.500" r="2.200" fill="#e2a43c"/><circle cx="2.800" cy="-15" r="1.600" fill="#e9c070"/><circle cx="-3.200" cy="-15.200" r="1.400" fill="#4a3a1a"/></g></g>
<g transform="translate(446.00 367.50) scale(0.9963 1.0038)"><g clip-path="url(#cc)"><rect width="54" height="52" fill="#e0e0e0"/><path d="M0 2.6 H54 M0 6.7 H54 M0 10.8 H54 M0 14.9 H54 M0 19.0 H54 M0 23.1 H54 M0 27.2 H54 M0 31.3 H54 M0 35.4 H54 M0 39.5 H54 M0 43.6 H54 M0 47.7 H54 M0 51.8 H54" stroke="#efefef" stroke-width=".8"/><path d="M1.5 -1.5 v4.100 M9.7 -1.5 v4.100 M17.9 -1.5 v4.100 M26.1 -1.5 v4.100 M34.3 -1.5 v4.100 M42.5 -1.5 v4.100 M50.7 -1.5 v4.100 M5.6 2.6 v4.100 M13.8 2.6 v4.100 M22.0 2.6 v4.100 M30.2 2.6 v4.100 M38.4 2.6 v4.100 M46.6 2.6 v4.100 M54.8 2.6 v4.100 M1.5 6.7 v4.100 M9.7 6.7 v4.100 M17.9 6.7 v4.100 M26.1 6.7 v4.100 M34.3 6.7 v4.100 M42.5 6.7 v4.100 M50.7 6.7 v4.100 M5.6 10.8 v4.100 M13.8 10.8 v4.100 M22.0 10.8 v4.100 M30.2 10.8 v4.100 M38.4 10.8 v4.100 M46.6 10.8 v4.100 M54.8 10.8 v4.100 M1.5 14.9 v4.100 M9.7 14.9 v4.100 M17.9 14.9 v4.100 M26.1 14.9 v4.100 M34.3 14.9 v4.100 M42.5 14.9 v4.100 M50.7 14.9 v4.100 M5.6 19.0 v4.100 M13.8 19.0 v4.100 M22.0 19.0 v4.100 M30.2 19.0 v4.100 M38.4 19.0 v4.100 M46.6 19.0 v4.100 M54.8 19.0 v4.100 M1.5 23.1 v4.100 M9.7 23.1 v4.100 M17.9 23.1 v4.100 M26.1 23.1 v4.100 M34.3 23.1 v4.100 M42.5 23.1 v4.100 M50.7 23.1 v4.100 M5.6 27.2 v4.100 M13.8 27.2 v4.100 M22.0 27.2 v4.100 M30.2 27.2 v4.100 M38.4 27.2 v4.100 M46.6 27.2 v4.100 M54.8 27.2 v4.100 M1.5 31.3 v4.100 M9.7 31.3 v4.100 M17.9 31.3 v4.100 M26.1 31.3 v4.100 M34.3 31.3 v4.100 M42.5 31.3 v4.100 M50.7 31.3 v4.100 M5.6 35.4 v4.100 M13.8 35.4 v4.100 M22.0 35.4 v4.100 M30.2 35.4 v4.100 M38.4 35.4 v4.100 M46.6 35.4 v4.100 M54.8 35.4 v4.100 M1.5 39.5 v4.100 M9.7 39.5 v4.100 M17.9 39.5 v4.100 M26.1 39.5 v4.100 M34.3 39.5 v4.100 M42.5 39.5 v4.100 M50.7 39.5 v4.100 M5.6 43.6 v4.100 M13.8 43.6 v4.100 M22.0 43.6 v4.100 M30.2 43.6 v4.100 M38.4 43.6 v4.100 M46.6 43.6 v4.100 M54.8 43.6 v4.100 M1.5 47.7 v4.100 M9.7 47.7 v4.100 M17.9 47.7 v4.100 M26.1 47.7 v4.100 M34.3 47.7 v4.100 M42.5 47.7 v4.100 M50.7 47.7 v4.100 M5.6 51.8 v4.100 M13.8 51.8 v4.100 M22.0 51.8 v4.100 M30.2 51.8 v4.100 M38.4 51.8 v4.100 M46.6 51.8 v4.100 M54.8 51.8 v4.100" stroke="#efefef" stroke-width=".8"/></g><rect x="11.800" y="11.300" width="31.800" height="26.300" fill="#b4b4b4"/><rect x="15.300" y="13.200" width="25.100" height="24.400" fill="#fff"/><rect x="10.800" y="37.500" width="33.400" height="6" fill="#fff"/><g transform="translate(28.200 36.800)"><path d="M-4 3 h8" stroke="#222" stroke-width="1.300"/><path d="M0 0 L-1 -10 M0 0 L-6 -7 L-9 -9 M0 0 L3 -9 L5.500 -14 M0 0 L-3.500 -11 M0 0 L4.500 -6" stroke="#1e4a1c" stroke-width="1" fill="none"/><path d="M-4 0 C-3 -4 3 -4 4.500 0 Z" fill="#2e7a2a"/><circle cx="-6" cy="-11.500" r="1.800" fill="#8a3a9a"/><circle cx="-.5" cy="-12" r="1.800" fill="#8e3c9e"/><circle cx="5.800" cy="-9.500" r="1.700" fill="#8a3a9a"/><circle cx="-3" cy="-8" r="1.400" fill="#2a6a28"/><circle cx="2" cy="-6.500" r="1.500" fill="#2a6a28"/></g></g>
</g>
<g id="ab2">
<rect x="552.600" y="164.600" width="73.600" height="105.800" fill="#d8202e"/><rect x="552.400" y="165.800" width="1.200" height="103.600" fill="#4a4a4a"/>
<rect x="553.300" y="165.800" width="72" height="103.300" fill="#e8e8e8"/>
<rect x="553.800" y="247.700" width="71.300" height="21.200" fill="#fff"/>
<g transform="translate(553.80 166.20)"><rect width="23.60" height="11.50" fill="#a6dbf6"/><g fill="#fff" filter="url(#bs)"><ellipse cx="5" cy="8.7" rx="6" ry="2" opacity=".85"/><ellipse cx="17" cy="9.7" rx="7" ry="2.200" opacity=".9"/><ellipse cx="8" cy="2.500" rx="5" ry="1.500" opacity=".6"/></g><rect y="11.20" width="23.60" height="6.70" fill="url(#gnd)"/><ellipse cx="10.500" cy="12.500" rx="1" ry=".6" fill="#e8d2b4"/></g>
<g transform="translate(577.30 166.20)"><rect width="23.60" height="11.50" fill="#a6dbf6"/><g fill="#fff" filter="url(#bs)"><ellipse cx="5" cy="8.7" rx="6" ry="2" opacity=".85"/><ellipse cx="17" cy="9.7" rx="7" ry="2.200" opacity=".9"/><ellipse cx="8" cy="2.500" rx="5" ry="1.500" opacity=".6"/></g><rect y="11.20" width="23.60" height="6.70" fill="url(#gnd)"/><path d="M4.500 15.500 L6 12 C7 10.500 10 10 12 10.200 C14 9 16 6 18 4.200 L19.500 4.800 C18 6.500 16 10 14 12 L13.500 16.500 H12.200 L12 13.500 L9.500 13.500 L9 16.500 H7.800 L7.600 13.500 C6.500 14 5.500 15 4.500 15.500 Z" fill="#767676"/><circle cx="19.300" cy="4.300" r="1" fill="#2a8a2a"/></g>
<g transform="translate(601.10 166.20)"><rect width="23.60" height="11.50" fill="#a6dbf6"/><g fill="#fff" filter="url(#bs)"><ellipse cx="5" cy="8.7" rx="6" ry="2" opacity=".85"/><ellipse cx="17" cy="9.7" rx="7" ry="2.200" opacity=".9"/><ellipse cx="8" cy="2.500" rx="5" ry="1.500" opacity=".6"/></g><rect y="11.20" width="23.60" height="6.70" fill="url(#gnd)"/><path d="M13 15 V12" stroke="#222" stroke-width=".7"/><path d="M13 12.500 l-2 -1.200 l2 -.6 l2 .6 z" fill="#2a8a2a"/></g>
<g transform="translate(553.80 184.60)"><rect width="23.60" height="12.10" fill="#a6dbf6"/><g fill="#fff" filter="url(#bs)"><ellipse cx="5" cy="9.3" rx="6" ry="2" opacity=".85"/><ellipse cx="17" cy="10.3" rx="7" ry="2.200" opacity=".9"/><ellipse cx="8" cy="2.500" rx="5" ry="1.500" opacity=".6"/></g><rect y="11.80" width="23.60" height="6.60" fill="url(#gnd)"/><path d="M9.500 14.500 V12" stroke="#222" stroke-width=".7"/><path d="M9.500 12.800 l-2.200 -1.400 l2.200 -.4 l2.200 .4 z" fill="#237a22"/></g>
<g transform="translate(577.30 184.60)"><rect width="23.60" height="12.10" fill="#a6dbf6"/><g fill="#fff" filter="url(#bs)"><ellipse cx="5" cy="9.3" rx="6" ry="2" opacity=".85"/><ellipse cx="17" cy="10.3" rx="7" ry="2.200" opacity=".9"/><ellipse cx="8" cy="2.500" rx="5" ry="1.500" opacity=".6"/></g><rect y="11.80" width="23.60" height="6.60" fill="url(#gnd)"/><use href="#plantG" transform="translate(11.5 12.8) scale(0.50)"/><ellipse cx="11.500" cy="14" rx="2.200" ry=".9" fill="#0c0804"/></g>
<g transform="translate(601.10 184.60)"><rect width="23.60" height="12.10" fill="#a6dbf6"/><g fill="#fff" filter="url(#bs)"><ellipse cx="5" cy="9.3" rx="6" ry="2" opacity=".85"/><ellipse cx="17" cy="10.3" rx="7" ry="2.200" opacity=".9"/><ellipse cx="8" cy="2.500" rx="5" ry="1.500" opacity=".6"/></g><rect y="11.80" width="23.60" height="6.60" fill="url(#gnd)"/><path d="M.5 11 C1 7 4 5.500 8 6 C10 4.500 13 5 14.500 7 C15.500 9 15.500 12 14.500 14 L13 14.500 L12.500 17.500 H10.500 L10 15.500 H6.500 L6 17.800 H3.500 L3 15 C1.500 14 .500 12.500 .500 11 Z" fill="#7d6f66"/><path d="M14 11.500 C15.500 13.500 18 13.500 19 11.500 C19.500 10 19 8.500 18 8 C20 8 21 10 20.500 12 C19.500 14.500 16 15 14 13.500 Z" fill="#efe6d2"/><circle cx="12.500" cy="4.500" r="1.400" fill="#2a8a2a"/><path d="M12.500 2 v3" stroke="#222" stroke-width=".7"/></g>
<g transform="translate(553.80 203.50)"><rect width="23.60" height="15.50" fill="#a6dbf6"/><g fill="#fff" filter="url(#bs)"><ellipse cx="5" cy="12.7" rx="6" ry="2" opacity=".85"/><ellipse cx="17" cy="13.7" rx="7" ry="2.200" opacity=".9"/><ellipse cx="8" cy="2.500" rx="5" ry="1.500" opacity=".6"/></g><rect y="15.20" width="23.60" height="6.80" fill="url(#gnd)"/><use href="#plantG" transform="translate(10.9 16.0) scale(0.55)"/><ellipse cx="10.900" cy="17.500" rx="2" ry=".8" fill="#0c0804"/></g>
<g transform="translate(577.30 203.50)"><rect width="23.60" height="15.50" fill="#8c9fae"/><g fill="#a9b6c0" filter="url(#bs)"><ellipse cx="6" cy="12.7" rx="7" ry="2.200"/><ellipse cx="18" cy="4" rx="6" ry="2"/></g><rect y="15.20" width="23.60" height="6.80" fill="url(#gnd)"/><use href="#plantG" transform="translate(11.0 16.0) scale(0.55)"/><ellipse cx="11" cy="17.500" rx="2" ry=".8" fill="#0c0804"/><g transform="translate(4.5 0)"><circle cx="12.300" cy="2.600" r="1.500" fill="#e6b89a"/><path d="M11 1.800 C11 .5 13.500 .5 13.800 2 L12.500 2.200 Z" fill="#3a2418"/><path d="M11 4.200 H13.800 L14.300 10 H10.800 Z" fill="#3f6f92"/><path d="M10.800 10 H14.300 L16 18.500 L14.800 18.800 L12.800 12.500 L10 18 L8.800 17.300 Z" fill="#6a5a52"/><path d="M8 17 l2.200 .8 l-.6 1.400 l-2.200 -.8 z M14.600 18.500 l2.600 -.3 l.2 1.300 l-2.600 .3 z" fill="#f0f0f0"/></g></g>
<g transform="translate(601.10 203.50)"><rect width="23.60" height="15.50" fill="#8c9fae"/><g fill="#a9b6c0" filter="url(#bs)"><ellipse cx="6" cy="12.7" rx="7" ry="2.200"/><ellipse cx="18" cy="4" rx="6" ry="2"/></g><rect y="15.20" width="23.60" height="6.80" fill="url(#gndg)"/><use href="#plantG" transform="translate(13.0 16.0) scale(0.55)"/><ellipse cx="13" cy="17.500" rx="2" ry=".8" fill="#0c0804"/></g>
<g transform="translate(553.80 226.40)"><rect width="23.60" height="14.90" fill="#a6dbf6"/><g fill="#fff" filter="url(#bs)"><ellipse cx="5" cy="12.1" rx="6" ry="2" opacity=".85"/><ellipse cx="17" cy="13.1" rx="7" ry="2.200" opacity=".9"/><ellipse cx="8" cy="2.500" rx="5" ry="1.500" opacity=".6"/></g><rect y="14.60" width="23.60" height="6.80" fill="url(#gnd)"/><use href="#plantG" transform="translate(11.6 15.5) scale(0.55)"/><ellipse cx="11.600" cy="17" rx="2" ry=".8" fill="#0c0804"/></g>
<g transform="translate(577.30 226.40)"><rect width="23.60" height="14.90" fill="#8c9fae"/><g fill="#a9b6c0" filter="url(#bs)"><ellipse cx="6" cy="12.1" rx="7" ry="2.200"/><ellipse cx="18" cy="4" rx="6" ry="2"/></g><rect y="14.60" width="23.60" height="6.80" fill="url(#gndg)"/><use href="#plantG" transform="translate(12.8 15.5) scale(0.55)"/><ellipse cx="12.800" cy="17" rx="2" ry=".8" fill="#0c0804"/></g>
<g transform="translate(601.10 226.40)"><rect width="23.60" height="14.90" fill="#8c9fae"/><g fill="#a9b6c0" filter="url(#bs)"><ellipse cx="6" cy="12.1" rx="7" ry="2.200"/><ellipse cx="18" cy="4" rx="6" ry="2"/></g><rect y="14.60" width="23.60" height="6.80" fill="url(#gnd)"/><path d="M16 0 H23.600 V12 C21 12.500 18.500 11 17.500 8 C15.500 6 15 3 16 0 Z" fill="#dfe3e6"/><use href="#plantG" transform="translate(13.8 14.5) scale(0.50)"/><path d="M0 16.500 C2 16.800 5 18.500 6.500 21.400 H0 Z" fill="#e9e9e9"/></g>
</g>
<g id="loose">
<use href="#car" transform="translate(521.500 202.500) scale(1.000)"/>
<g transform="translate(529.500 299.800)"><path d="M.5 3 C.5 1.500 1.500 1 3 1 H9.500 C10.500 1 11 1.600 11 3 V6.500 C14 6.500 18 7 20.500 9.500 L21 12 H.5 Z" fill="#8e1428"/><path d="M1.800 2.200 H9.800 V6 H1.800 Z" fill="#3a2a30"/><circle cx="16.800" cy="11" r="2.400" fill="#2a2224" stroke="#d8d0d0" stroke-width=".8"/><path d="M.5 12.300 H13" stroke="#d8d0d0" stroke-width=".8"/></g>
<g transform="translate(513.300 294) scale(1.080)"><use href="#plantA"/><path d="M0 -13 V-17.500 M0 -14 L-2.500 -16.500 M0 -14.500 L2.500 -15.500" stroke="#2a5a1c" stroke-width=".7"/><circle cx="-.5" cy="-18" r="1.500" fill="#e9a63a"/><circle cx="2.200" cy="-16" r="1.200" fill="#e8a33a"/><circle cx="-2.300" cy="-16.600" r="1" fill="#caa03a"/></g>
<use href="#plantG" transform="translate(544.6 242.5) scale(0.55)"/>
<ellipse cx="544.600" cy="243.800" rx="2" ry=".8" fill="#0c0804"/>
<use href="#plantA" transform="translate(547.2 194.5) scale(0.42)"/>
<circle cx="547.500" cy="187.500" r=".9" fill="#c9962a"/>
<path d="M546 180 c0 -2.500 2.500 -2.500 2.500 0 z" fill="#2f9a2c"/><circle cx="547.200" cy="177" r=".8" fill="#c9962a"/>
<path d="M543.500 169.500 l1 -2.500" stroke="#2a6a22" stroke-width=".7"/>
<rect x="642.500" y="252" width="9.500" height="10" fill="#3e3e3e"/>
</g>
</svg>
<!--CANVAS_E-->
<div class="a" id="grayrect"></div>
<div class="a" id="grayline"></div>
<div class="a" id="vscroll"></div>
<div class="a" style="left:926px;top:425px;width:11px;height:19px;border-radius:5px;background:#4b4b4b"></div>
<!--TOOLS_S--><!-- tools panel -->
<div class="a" id="tools"></div>
<div class="a" id="toolshead"></div>
<svg style="left:0;top:0" width="80" height="546" viewBox="0 0 80 546">
<g fill="none" stroke="#c4c4c4" stroke-width="1.1">
 <!-- header -->
 <path d="M19.500 93.500 L23.800 97.800 M23.800 93.500 L19.500 97.800" stroke="#b8b8b8" stroke-width="1.200"/>
 <path d="M61.800 93.600 L59.900 95.600 L61.800 97.600 M65 93.600 L63.100 95.600 L65 97.600" stroke="#9a9a9a" stroke-width="1"/>
 <path d="M35.500 102.400 V105.400 M38 102.400 V105.400 M40.500 102.400 V105.400 M43 102.400 V105.400 M45.500 102.400 V105.400 M48 102.400 V105.400" stroke="#262626" stroke-width="1.300"/>
 <!-- separators -->
 <path d="M20 151.700 H66.500 M20 230.300 H66.500 M20 289.900 H66.500 M20 332.400 H66.500 M20 355 H66.500 M20 396 H66.500" stroke="#434343" stroke-width="1"/>
 <!-- selected bg -->
 <rect x="20.300" y="113" width="21.700" height="17" rx="2" fill="#232323" stroke="#2c2c2c" stroke-width=".8"/>
 <!-- selection tool -->
 <path d="M27.700 116.800 V128.500 L30.700 125.600 L36.500 125.400 Z" stroke="#d0d0d0" stroke-width="1.200" stroke-linejoin="miter"/>
 <!-- direct selection -->
 <path d="M51 115.800 V129 L54.600 125.600 L60.300 125.200 Z" fill="#c6c6c6" stroke="none"/>
 <!-- wand -->
 <path d="M25.200 147 L33.800 138.400" stroke-width="1.700"/>
 <path d="M33.200 139 L35 137.200" stroke="#8a8a8a" stroke-width="1.700"/>
 <path d="M29.800 134.500 L30.500 136.300 L32.300 137 L30.500 137.700 L29.800 139.500 L29.100 137.700 L27.300 137 L29.100 136.300 Z M35.300 134.600 L35.800 135.800 L37 136.300 L35.800 136.800 L35.300 138 L34.800 136.800 L33.600 136.300 L34.800 135.800 Z M36.300 140.200 L36.700 141.100 L37.600 141.500 L36.700 141.900 L36.300 142.800 L35.900 141.900 L35 141.500 L35.900 141.100 Z" fill="#c6c6c6" stroke="none"/>
 <!-- lasso -->
 <path d="M52.500 143.600 C47.500 142.600 46.800 138 50.500 136 C54 134.200 59.500 135 60.600 138" stroke-width="1.100"/>
 <path d="M52.700 143.600 C50.500 143.500 50.300 141 52 141 C53.500 141 53.500 143 52.600 144.500 C52 145.600 51.500 146.300 50.800 147" stroke-width="1"/>
 <path d="M55.200 137.800 V147.400 L57.700 145 L62.300 144.700 Z" fill="#c6c6c6" stroke="none"/>
 <!-- pen + -->
 <path d="M23 159.500 H28 M25.500 157 V162" stroke="#d6d6d6" stroke-width="1.400"/>
 <path d="M27.500 170 L29.200 162.800 L33.200 160.600 L37.200 164.600 L35 168.600 Z" fill="#c6c6c6" stroke="none"/>
 <path d="M27.900 169.600 L32 165.500" stroke="#313131" stroke-width=".9"/><circle cx="32.300" cy="165.200" r="1" fill="#313131" stroke="none"/>
 <path d="M34.200 159.400 L35.800 157.600 L39.600 161.400 L38 163.200 Z" fill="#c6c6c6" stroke="none"/>
 <!-- curvature pen -->
 <path d="M48.300 157.500 C50.800 159.500 46.300 163.600 47.300 167 C47.800 168.800 49.500 169.400 51 168.200" stroke-width="1"/>
 <path d="M51 170 L52.700 162.800 L56.700 160.600 L60.700 164.600 L58.500 168.600 Z" fill="#c6c6c6" stroke="none"/>
 <path d="M51.400 169.600 L55.500 165.500" stroke="#313131" stroke-width=".9"/><circle cx="55.800" cy="165.200" r="1" fill="#313131" stroke="none"/>
 <path d="M57.700 159.400 L59.300 157.600 L63.100 161.400 L61.500 163.200 Z" fill="#c6c6c6" stroke="none"/>
 <!-- Type -->
 <path d="M26 179.800 V177.200 H37 V179.800 M31.500 177.200 V187 M29.300 187.100 H33.700" stroke="#cecece" stroke-width="1.500"/>
 <!-- line -->
 <path d="M49.700 187.400 L60 177" stroke-width="1.300"/>
 <!-- rectangle -->
 <rect x="25.500" y="195.500" width="12.300" height="10" fill="#585858" stroke="#c6c6c6" stroke-width="1"/>
 <!-- brush -->
 <path d="M60.600 194.500 C61.400 195.800 58.500 200.500 55.800 203 L54 201.300 C56 198.500 59.500 195 60.600 194.500 Z" fill="#c6c6c6" stroke="none"/>
 <path d="M53.400 202 L55.200 203.800 C54.500 206 51.500 207 48.800 206.600 C50.800 205.600 51.500 203 53.400 202 Z" fill="#c6c6c6" stroke="none"/>
 <!-- shaper -->
 <path d="M29.500 224 A5.300 5.300 0 1 1 34 219.500" stroke-width="1.200"/><circle cx="28.800" cy="219.200" r="4" fill="#555" stroke="none"/>
 <path d="M29.600 225.600 L38.400 215.400" stroke-width="2.200"/>
 <!-- eraser -->
 <path d="M54.600 213.300 L61.600 218 L56.500 225 L49 220.500 Z" fill="#c6c6c6" stroke="none"/>
 <path d="M51.200 219 L56.200 222.400 L55.200 223.800 L50.300 220.500 Z" fill="#313131" stroke="none"/>
 <path d="M49 220.500 L56.500 225" stroke-width="1"/>
 <!-- rotate -->
 <path d="M28.200 239 C31 236.600 35.500 237.200 37.200 240.600 C38.300 243 37.600 245.500 36 247" stroke-width="1.200"/>
 <path d="M35.500 247.500 C33 249 29.500 248.500 27.500 246.200 C26 244.500 25.800 242.500 26.300 241" stroke-width="1.100" stroke-dasharray="1.300 1.200"/>
 <path d="M25 238.200 L29.600 237 L28.600 241.300 Z" fill="#c6c6c6" stroke="none"/>
 <!-- scale -->
 <rect x="52" y="236.300" width="10" height="8.500" stroke-width="1"/><rect x="47.800" y="241.200" width="7.200" height="6.600" stroke-width="1"/>
 <path d="M55.500 243 L60 238.500 M57.200 238.200 H60.300 V241.300" stroke-width="1"/>
 <!-- width/warp -->
 <path d="M24.500 264.500 C28 263.500 27.500 259.500 29.500 257 C31 255.300 33 256 32.500 258 C32 260.500 34.500 260.500 36 259 C37.500 257.500 38.800 258.500 38.800 260.500" stroke-width="1.300"/>
 <path d="M26 257 C28.500 258 30.500 261 30.500 264.500 M33 256 C34.500 258.500 35 262 34 266" stroke-width=".9"/>
 <circle cx="30.300" cy="261" r="1.200" fill="#c6c6c6" stroke="none"/><path d="M24 266.300 L27 263.300" stroke-width="1.300"/>
 <!-- free transform -->
 <path d="M52 256.800 H62 V265.500 H52 Z" stroke-width="1" stroke-dasharray="1.600 1.100"/>
 <path d="M50.800 255.600 h2.200 v2.200 h-2.200z M60.900 255.600 h2.200 v2.200 h-2.200z M50.800 264.300 h2.200 v2.200 h-2.200z M60.900 264.300 h2.200 v2.200 h-2.200z" fill="#c6c6c6" stroke="none"/>
 <path d="M47.500 254.500 V265 L50.300 262.500 L54.800 262 Z" fill="#c6c6c6" stroke="#313131" stroke-width=".5"/>
 <!-- shape builder -->
 <ellipse cx="28.600" cy="278.500" rx="4.600" ry="4.400" stroke-width="1"/><ellipse cx="32.800" cy="277.600" rx="4.200" ry="4" stroke-width="1"/>
 <path d="M26 278.600 H31" stroke-width=".9" stroke-dasharray="1.200 1"/>
 <path d="M33.300 277.500 V286 L35.600 283.900 L39.300 283.600 Z" fill="#c6c6c6" stroke="#313131" stroke-width=".5"/>
 <!-- perspective grid -->
 <path d="M48 273 V285.500 H62.300 Z" stroke-width="1"/>
 <path d="M48 277.200 L53 278.500 M48 281.300 L57.500 282 M51.500 276 V285.500 M55 279.200 V285.500" stroke-width=".8"/>
 <path d="M53 279.800 H55.800 M53 281.400 H57.600 M53 283 H59.500 M53 284.500 H61" stroke-width=".7" stroke="#9a9a9a"/>
 <!-- mesh -->
 <rect x="25.500" y="297.500" width="12" height="10" stroke-width="1"/>
 <path d="M25.500 301 C29 299.500 33 303 37.500 300.500 M25.500 304.500 C29 303 33 306 37.500 304 M29.300 297.500 C30.500 300.500 28 304 29.800 307.500 M33.600 297.500 C35 300.500 32.500 304 34 307.500" stroke-width=".8"/>
 <!-- gradient -->
 <rect x="48.800" y="297.500" width="11.700" height="10" fill="url(#tg)" stroke="#c6c6c6" stroke-width="1"/>
 <!-- eyedropper -->
 <path d="M25 327.500 L25.700 325 L32 318.700 L33.800 320.500 L27.500 326.800 Z" stroke-width="1"/>
 <path d="M31.700 317.600 L34.900 320.800 M33.400 319.200 L35.400 316.200 C36.400 315 37.600 316.200 36.800 317.200 Z" stroke-width="1.500" fill="#c6c6c6"/>
 <!-- blend -->
 <rect x="47.800" y="315.700" width="5.500" height="5.500" fill="#c6c6c6" stroke="none"/>
 <circle cx="54.800" cy="320.500" r="3" fill="#7a7a7a" stroke="#c6c6c6" stroke-width=".9"/>
 <circle cx="58.300" cy="323.500" r="3.200" fill="#313131" stroke="#c6c6c6" stroke-width="1"/>
 <!-- symbol sprayer -->
 <path d="M24 338 h1.400 v1.400 h-1.400z M26.600 338 h1.400 v1.400 h-1.400z M24 340.600 h1.400 v1.400 h-1.400z M26.600 340.600 h1.400 v1.400 h-1.400z M24 343.200 h1.400 v1.400 h-1.400z M29.200 338 h1.400 v1.400 h-1.400z" fill="#c6c6c6" stroke="none"/>
 <path d="M30.800 342.200 H37.600 V349.500 H30.800 Z" stroke-width="1"/><path d="M32.300 342 V339.800 H36.200 V342 M33.200 339.500 V338 H35.300" stroke-width="1"/>
 <circle cx="34.200" cy="346" r="1.600" fill="#c6c6c6" stroke="none"/>
 <!-- graph -->
 <path d="M47.800 337.500 V349 H61.500" stroke-width="1"/>
 <path d="M50 343 h2 v5.500 h-2z M53.300 339 h2 v9.500 h-2z M56.600 341.500 h2 v7 h-2z M59.500 345 h1.600 v3.500 h-1.600z" fill="#c6c6c6" stroke="none"/>
 <!-- artboard -->
 <path d="M23 362.500 H29 M26.200 359.300 V366" stroke-width="1"/>
 <path d="M27.300 363.800 H34.300 L36.800 366.300 V371.300 H27.300 Z" fill="#555" stroke="#c6c6c6" stroke-width="1"/>
 <!-- slice -->
 <path d="M48.500 372.300 L50 367.500 L57.500 360 L60 362.500 L52.500 370.200 Z" stroke-width="1"/>
 <path d="M56.300 361.200 L58.800 363.700 L60 362.500 L57.500 360 Z" fill="#c6c6c6"/>
 <path d="M50.200 367.800 L52.300 369.900" stroke-width=".8"/>
 <!-- hand -->
 <path d="M28.500 391.800 C27 389.500 25.800 387.500 25.200 386.300 C24.800 385.300 26 384.700 26.800 385.500 L28.300 387 V381.800 C28.300 380.700 29.800 380.700 29.800 381.800 V380.700 C29.800 379.600 31.500 379.600 31.500 380.700 V381.200 C31.500 380.200 33.200 380.200 33.200 381.200 V382.300 C33.200 381.400 34.800 381.400 34.800 382.300 V384 C34.800 383.300 36.700 383.300 36.700 385 V387.300 C36.700 389.300 36 390.300 35.400 391.800 Z" fill="#c6c6c6" stroke="none"/>
 <path d="M29.900 382 V385.600 M31.600 381.500 V385.600 M33.300 382.300 V385.800" stroke="#313131" stroke-width=".5"/>
 <!-- zoom -->
 <circle cx="53.300" cy="384.600" r="4.200" stroke-width="1.300"/><path d="M56.400 387.800 L60.300 391.500" stroke-width="2"/>
 <!-- small flyout triangles -->
 <path d="M65 127.500 V130 H62.500 Z M41.500 167.800 V170.300 H39 Z M41.500 185.200 V187.700 H39 Z M64.800 185.200 V187.700 H62.300 Z M41.500 204.200 V206.700 H39 Z M64.800 204.200 V206.700 H62.300 Z M41.500 223 V225.500 H39 Z M64.800 223 V225.500 H62.300 Z M41.500 246 V248.500 H39 Z M64.800 246 V248.500 H62.300 Z M41.500 264.500 V267 H39 Z M41.500 283.600 V286.100 H39 Z M64.800 283.600 V286.100 H62.300 Z M41 326 V328.500 H38.500 Z M41 348 V350.500 H38.500 Z M64.800 348 V350.500 H62.300 Z M64.800 370.500 V373 H62.300 Z M41 389.600 V392.100 H38.500 Z" fill="#a8a8a8" stroke="none"/>
</g>
<defs><linearGradient id="tg"><stop offset="0" stop-color="#2e2e2e"/><stop offset="1" stop-color="#b8b8b8"/></linearGradient>
<linearGradient id="tg2"><stop offset="0" stop-color="#f4f4f4"/><stop offset="1" stop-color="#2a2a2a"/></linearGradient></defs>
<!-- fill / stroke -->
<rect x="34.200" y="414.600" width="27" height="26.800" fill="#fff"/>
<rect x="41.600" y="421.400" width="12.700" height="12.700" fill="#2c2c2c"/>
<path d="M34.600 441 L61 414.900" stroke="#f0101e" stroke-width="1.700"/>
<rect x="20.400" y="401.400" width="26.400" height="25.200" fill="#7e7e7e" stroke="#d2d2d2" stroke-width="1"/>
<path d="M55 403.500 H59.500 V408.500" fill="none" stroke="#c6c6c6" stroke-width="1.100"/><path d="M54.300 403.500 L56.800 401.500 V405.500 Z M59.500 409.800 L57.500 407.300 H61.500 Z" fill="#c6c6c6"/>
<rect x="23" y="435.800" width="6" height="5.600" fill="#2a2a2a" stroke="#e0e0e0" stroke-width="1"/><rect x="20" y="433" width="5.600" height="5.300" fill="#f2f2f2" stroke="#2a2a2a" stroke-width=".6"/>
<!-- colour mode row -->
<rect x="20.500" y="448" width="14.700" height="14" rx="1.500" fill="#262626"/>
<rect x="35.700" y="448" width="14.500" height="14" rx="1.500" fill="#303030"/><rect x="50.700" y="448" width="14.500" height="14" rx="1.500" fill="#303030"/>
<rect x="23.300" y="451" width="8.600" height="8.400" fill="#7e7e7e"/>
<rect x="38" y="451" width="9.400" height="8.400" fill="url(#tg2)"/>
<rect x="53.300" y="451" width="9.400" height="8.400" fill="#fff"/><path d="M53.600 459.200 L62.500 451.200" stroke="#f0101e" stroke-width="2"/>
<!-- draw mode row -->
<rect x="20.500" y="467" width="14.700" height="13.600" rx="1.500" fill="#262626"/>
<rect x="35.700" y="467" width="14.500" height="13.600" rx="1.500" fill="#303030"/><rect x="50.700" y="467" width="14.500" height="13.600" rx="1.500" fill="#303030" stroke="#3e3e3e" stroke-width=".7"/>
<circle cx="26.500" cy="472.800" r="3.200" fill="#9a9a9a" stroke="#d0d0d0" stroke-width=".9"/><rect x="27" y="473.500" width="4.600" height="4.300" fill="#d0d0d0"/>
<rect x="42.500" y="473.500" width="4.600" height="4.300" fill="#d0d0d0"/><circle cx="41.800" cy="472.800" r="3.200" fill="#9a9a9a" stroke="#d0d0d0" stroke-width=".9"/>
<circle cx="57.800" cy="473.600" r="2.800" fill="#3c3c3c" stroke="#505050" stroke-width=".9"/>
<!-- screen mode -->
<rect x="34.600" y="491.300" width="10.500" height="8" fill="#4a4a4a" stroke="#c6c6c6" stroke-width="1"/>
<rect x="41.500" y="487.800" width="10" height="8" fill="#4a4a4a" stroke="#c6c6c6" stroke-width="1"/><path d="M41.500 489.300 H51.500" stroke="#c6c6c6" stroke-width="1.200"/><path d="M34.600 492.800 H41" stroke="#c6c6c6" stroke-width="1.200"/>
</svg>
<!--TOOLS_E-->
<!--LAYERS_S--><!-- layers panel -->
<div class="a" id="layers"></div>
<div class="a" id="lhead"></div>
<div class="a" style="left:767px;top:142px;width:81px;height:22px;background:#2c2c2c"></div>
<div class="a" id="ltab"></div>
<div class="a" style="left:730px;top:311.500px;width:208px;height:1px;background:#242424"></div>
<div class="t" id="capas" style="left:737px;top:148.500px;font-size:9.3px;font-weight:bold;color:#f2f2f2;transform:scaleX(0.846)">Capas</div>
<div class="t" id="mesas" style="left:774px;top:148.500px;font-size:9.3px;font-weight:bold;color:#b2b2b2;transform:scaleX(0.897)">Mesas de trabajo</div>
<div class="a" id="llist"></div>
<div class="a" style="left:734px;top:186px;width:199.500px;height:16px;background:#2f4b63"></div>
<div class="a" style="left:734px;top:185.400px;width:199.500px;height:1px;background:#404040"></div>
<div class="a" style="left:734px;top:201.800px;width:199.500px;height:1px;background:#404040"></div>
<div class="a" style="left:734px;top:218.200px;width:199.500px;height:1px;background:#404040"></div>
<div class="a" style="left:734px;top:234.600px;width:199.500px;height:1px;background:#404040"></div>
<div class="a" style="left:750.400px;top:169px;width:1px;height:66px;background:rgba(80,80,80,.55)"></div>
<div class="a" style="left:765.500px;top:169px;width:1px;height:66px;background:rgba(80,80,80,.55)"></div>
<div class="a" style="left:771.500px;top:169px;width:1px;height:66px;background:rgba(80,80,80,.55)"></div>
<div class="a" style="left:905.400px;top:169px;width:1px;height:66px;background:rgba(80,80,80,.55)"></div>
<div class="a" style="left:767.700px;top:170px;width:2.500px;height:14.500px;border-radius:1px;background:#4f4ff8"></div>
<div class="a" style="left:767.700px;top:186.600px;width:2.500px;height:14.500px;border-radius:1px;background:#f84f55"></div>
<div class="a" style="left:767.700px;top:203px;width:2.500px;height:14.500px;border-radius:1px;background:#4f80f8"></div>
<div class="a" style="left:767.700px;top:219.400px;width:2.500px;height:14.500px;border-radius:1px;background:#40e860"></div>
<div class="t" id="ly4" style="left:808.500px;top:172.500px;font-size:10px;color:#e2e2e2;transform:scaleX(0.809)">Layer 4</div>
<div class="t" id="lysep" style="left:808.500px;top:188.900px;font-size:10px;color:#f0f0f0;transform:scaleX(0.844)">separador</div>
<div class="t" id="lyc1" style="left:808.500px;top:205.300px;font-size:10px;color:#e2e2e2;transform:scaleX(0.806)">Capa 1</div>
<div class="t" id="ly3" style="left:808.500px;top:221.700px;font-size:10px;color:#e2e2e2;transform:scaleX(0.809)">Layer 3</div>
<div class="t" id="ncapas" style="left:733.500px;top:300.500px;font-size:9px;color:#c4c4c4;transform:scaleX(0.894)">4 capas</div>
<svg style="left:0;top:0" width="1000" height="546" viewBox="0 0 1000 546">
<defs>
<g id="eye"><path d="M-4.600 0 C-2.800 -3.300 2.800 -3.300 4.600 0 C2.800 3.300 -2.800 3.300 -4.600 0 Z" fill="none" stroke="#cfcfcf" stroke-width="1"/><circle r="1.900" fill="#cfcfcf"/><circle cx="-.5" cy="-.5" r=".7" fill="#3a3a3a"/></g>
<g id="chev"><path d="M-1.600 -3.200 L1.600 0 L-1.600 3.200" fill="none" stroke="#c8c8c8" stroke-width="1.100"/></g>
<g id="thumb"><rect x="-7.200" y="-7.300" width="14.400" height="14.600" rx="1.500" fill="#101010"/><rect x="-6.300" y="-6.400" width="12.600" height="12.800" rx=".8" fill="#fdfdfd"/></g>
</defs>
<use href="#eye" x="741.600" y="177.200"/><use href="#eye" x="741.600" y="193.700"/><use href="#eye" x="741.600" y="210.100"/><use href="#eye" x="741.600" y="226.500"/>
<path d="M755 176.500 h6.400 v5.300 h-6.400 z" fill="#cfcfcf"/><path d="M756.400 176.500 V174.800 C756.400 172.500 760 172.500 760 174.800 V176.500" fill="none" stroke="#cfcfcf" stroke-width="1.100"/><path d="M758.200 178.200 v2" stroke="#353535" stroke-width=".9"/>
<use href="#chev" x="778.500" y="177.200"/><use href="#chev" x="778.500" y="193.700"/><use href="#chev" x="778.500" y="210.100"/>
<use href="#thumb" x="797.600" y="177.300"/><use href="#thumb" x="797.600" y="193.700"/><use href="#thumb" x="797.600" y="210.100"/><use href="#thumb" x="797.600" y="226.500"/>
<path d="M791.500 174 H803.700 M791.500 177.200 H803.700 M791.500 180.400 H803.700 M794.600 171 V183.600 M797.700 171 V183.600 M800.800 171 V183.600" stroke="#d4d4d4" stroke-width=".5"/>
<path d="M793 211.500 l2.500 -1.500 l2 .8 l2.500 -2.200 l2.500 .3" stroke="#5a7a2a" stroke-width="1.600" fill="none"/><path d="M794 213.500 h3 M799.500 207.500 l2 -.5" stroke="#8a3a2a" stroke-width="1" fill="none"/><path d="M796 212.600 h1.500" stroke="#c9a020" stroke-width="1"/>
<g fill="none" stroke="#d2d2d2" stroke-width="1.200"><circle cx="913.900" cy="177.200" r="2.900"/><circle cx="913.900" cy="193.700" r="2.900"/><circle cx="913.900" cy="210.100" r="2.900"/><circle cx="913.900" cy="226.500" r="2.900"/></g>
<path d="M928.800 186 H933.600 V190.800 Z" fill="#d8d8d8"/>
<!-- header icons -->
<path d="M907.300 151.400 L910 154 L907.300 156.600 M911.300 151.400 L914 154 L911.300 156.600" fill="none" stroke="#c4c4c4" stroke-width="1.100"/>
<path d="M919.500 149.500 V157.700" stroke="#5a5a5a" stroke-width="1"/>
<path d="M925.800 151.800 H933.900 M925.800 155.400 H933.900" stroke="#8e8e8e" stroke-width="1.800"/>
<!-- footer icons -->
<circle cx="832.300" cy="303.300" r="2.900" fill="none" stroke="#5c5c5c" stroke-width="1.200"/><path d="M830.200 305.600 L826.700 308.800" stroke="#5c5c5c" stroke-width="1.400"/>
<rect x="847.200" y="299.800" width="5.800" height="5.800" fill="none" stroke="#c8c8c8" stroke-width="1.100"/><rect x="848.800" y="301.400" width="3" height="3" fill="#c8c8c8"/><path d="M850 307.500 V308.700 H855.800 V302.800 H854.600" fill="none" stroke="#8a8a8a" stroke-width="1"/>
<path d="M871.300 300.400 H876.700 V308 H869.800 V302.200 Z" fill="#c8c8c8"/><path d="M865.600 300 V303.800 H869 M866.800 302 l1.800 1.800 l-1.800 1.800" fill="none" stroke="#c8c8c8" stroke-width="1"/>
<path d="M887.600 300.300 H896 V308.500 H890.500 V304.800 H887.600 Z" fill="#c8c8c8"/><path d="M887.600 305.800 L890.300 308.500" stroke="#c8c8c8" stroke-width=".9"/>
<path d="M908.400 301.700 H916 M910.700 301.500 V300.300 H913.700 V301.500" fill="none" stroke="#c8c8c8" stroke-width="1"/><path d="M909.200 302.800 H915.200 V309 H909.200 Z" fill="none" stroke="#c8c8c8" stroke-width="1.100"/><path d="M911.200 304 V307.800 M913.200 304 V307.800" stroke="#c8c8c8" stroke-width=".8"/>
<path d="M826.800 313.500 V316 M829.300 313.500 V316 M831.800 313.500 V316 M834.300 313.500 V316 M836.800 313.500 V316 M839.300 313.500 V316" stroke="#252525" stroke-width="1.300"/>
</svg>
<!--LAYERS_E-->
<!--DOCKS_S--><!-- right docks -->
<div class="a" id="dockbg"></div>
<div class="a" id="dock1"></div>
<div class="a" id="dock1b"></div>
<div class="a" id="dock2"></div>
<svg style="left:0;top:0" width="1000" height="546" viewBox="0 0 1000 546">
<defs>
<g id="grip"><path d="M0 0 V2.800 M2.500 0 V2.800 M5 0 V2.800 M7.500 0 V2.800 M10 0 V2.800 M12.500 0 V2.800" stroke="#252525" stroke-width="1.300"/></g>
<linearGradient id="dg"><stop offset="0" stop-color="#3a3a3a"/><stop offset="1" stop-color="#c8c8c8"/></linearGradient>
<linearGradient id="dg2" x1="1" y1="0" x2="0" y2="1"><stop offset="0" stop-color="#d0d0d0"/><stop offset="1" stop-color="#505050"/></linearGradient>
</defs>
<!-- section separators -->
<g stroke="#262626" stroke-width="1.600">
<path d="M940 141.600 H969.500 M940 195 H969.500 M940 249.500 H969.500"/>
<path d="M971.500 141.600 H1000 M971.500 217.400 H1000 M971.500 293.200 H1000 M971.500 325.300 H1000 M971.500 356.800 H1000 M971.500 389.300 H1000 M971.500 421 H1000 M971.500 475 H1000"/>
</g>
<!-- collapse arrows -->
<g fill="none" stroke="#9a9a9a" stroke-width="1"><path d="M961 59.700 L959.300 61.400 L961 63.100 M964 59.700 L962.300 61.400 L964 63.100 M992 59.700 L990.300 61.400 L992 63.100 M995 59.700 L993.300 61.400 L995 63.100"/></g>
<!-- grippers -->
<use href="#grip" x="948.300" y="69"/><use href="#grip" x="979.300" y="69"/>
<use href="#grip" x="948.300" y="144.600"/><use href="#grip" x="979.300" y="144.600"/>
<use href="#grip" x="948.300" y="198.400"/><use href="#grip" x="979.300" y="220.500"/>
<use href="#grip" x="979.300" y="296.300"/><use href="#grip" x="979.300" y="328.400"/><use href="#grip" x="979.300" y="359.900"/><use href="#grip" x="979.300" y="392"/><use href="#grip" x="979.300" y="424.200"/>
<g fill="#cdcdcd" stroke="none">
<!-- dock1: color palette -->
<path d="M955.500 79 C959.800 79 963.200 81.300 963.200 84.500 C963.200 87.300 961 88 959.500 87.600 C958 87.200 957.300 88 957.500 88.800 C957.700 89.800 956.500 89.900 955 89.900 C950.500 89.900 947.200 87.500 947.200 84.600 C947.200 81.500 951 79 955.500 79 Z"/>
<g fill="#343434"><circle cx="950.200" cy="85.300" r="1.100"/><circle cx="952" cy="87.600" r="1"/><circle cx="955" cy="87.800" r="1"/><circle cx="958.500" cy="85.500" r="1.100"/><circle cx="960" cy="82.800" r="1.100"/><path d="M950 82.300 C951 80.800 953.500 80.500 954.500 81.200 C955 82 953 82.300 952.200 83 C951.300 83.700 950 83.300 950 82.300 Z"/></g>
<!-- color guide -->
<path d="M949.500 100.200 C956.500 100.500 961.600 105.600 962 113 H949.500 Z" fill="url(#dg2)"/><path d="M949.500 100.200 C956.500 100.500 961.600 105.600 962 113 H949.500 Z" fill="none" stroke="#cdcdcd" stroke-width="1"/>
<path d="M949.500 104.500 C954 104.800 957.400 108.300 957.800 113" fill="none" stroke="#9a9a9a" stroke-width=".7"/>
<!-- recolor -->
<circle cx="954" cy="129" r="4.800" fill="none" stroke="#cdcdcd" stroke-width="1.200"/><circle cx="954" cy="129" r="1.900"/>
<path d="M953.500 129 L960 122.300 M953.500 129 L960 135" stroke="#cdcdcd" stroke-width="1.100"/><circle cx="960.300" cy="122" r="1.500"/><circle cx="960.300" cy="135.200" r="1.500"/>
<!-- layers (active) -->
<rect x="944.400" y="151.800" width="20.600" height="16.800" rx="2" fill="#222"/>
<path d="M955.700 154 L963.500 158 L955.700 162 L948 158 Z" fill="#e4e4e4"/><path d="M949.600 160.800 L948 161.700 L955.700 166 L963.500 161.700 L961.900 160.800 L955.700 164 Z" fill="#e4e4e4"/>
<!-- artboards -->
<rect x="947.500" y="175.500" width="8.500" height="9" fill="#343434" stroke="#cdcdcd" stroke-width="1"/><rect x="951.500" y="180" width="10" height="8.700" fill="#343434" stroke="#cdcdcd" stroke-width="1"/>
<!-- align -->
<path d="M949.300 206.800 V221.300" stroke="#cdcdcd" stroke-width="1.200"/><rect x="951.200" y="209" width="5.800" height="4.300"/><rect x="951.200" y="215" width="10" height="4.300"/>
<!-- dock2: swatches -->
<rect x="979.200" y="80" width="13.200" height="9" fill="#cdcdcd"/>
<g fill="#555"><rect x="983" y="81.200" width="2.600" height="2.600"/><rect x="986.200" y="81.200" width="2.600" height="2.600" fill="#888"/><rect x="989.300" y="81.200" width="2.200" height="2.600"/><rect x="980" y="85" width="2.400" height="2.600" fill="#777"/><rect x="983" y="85" width="2.600" height="2.600" fill="#9a9a9a"/><rect x="986.200" y="85" width="2.600" height="2.600"/><rect x="989.300" y="85" width="2.200" height="2.600" fill="#8a8a8a"/></g>
<!-- brushes -->
<path d="M982.700 106 H990.400 L989.800 113.600 H983.300 Z"/>
<path d="M984 105.500 C982.500 103 981.500 101.500 980.600 102.500 C979.800 103.500 982 105 983 106.500 Z M986 105.500 C985.500 102.500 985.200 100 986.200 98.200 C987.300 100 987 103 987 105.500 Z M988.500 105.500 C989.500 103.500 991 101.800 992.500 102 C993.300 103 991 104 989.800 106 Z M984.300 101 C984.800 99.500 985.200 99.500 985.300 101.500 L985 104 Z"/>
<!-- symbols: club -->
<circle cx="986.300" cy="125.400" r="3.300"/><circle cx="983" cy="129.500" r="3.300"/><circle cx="989.700" cy="129.500" r="3.300"/><path d="M985.600 128 H987 C987 131.500 987.800 133.500 989.800 134.800 H982.800 C984.800 133.500 985.600 131.500 985.600 128 Z"/>
<!-- stroke -->
<rect x="979.300" y="154.800" width="14.200" height="1.300"/><rect x="979.300" y="158.400" width="14.200" height="2"/><rect x="979.300" y="162.400" width="14.200" height="2.700"/>
<!-- gradient -->
<rect x="979.800" y="177.200" width="13.300" height="9.400" fill="url(#dg)" stroke="#cdcdcd" stroke-width="1"/>
<!-- transparency -->
<circle cx="984.300" cy="203" r="5.200" fill="#c6c6c6"/><circle cx="987.700" cy="206.600" r="5" fill="#7e7e7e" stroke="#c6c6c6" stroke-width="1"/>
<!-- CC libraries -->
<g fill="none" stroke="#cdcdcd" stroke-width="1.300"><path d="M983 241.300 C979.800 241.300 978.300 239.300 978.500 237.200 C978.700 235 980.500 233.800 982.300 234 C983.200 231.800 985.500 231.300 987.300 232 C989 232.600 990 234 990.200 235 C992.500 234.700 994.500 236 994.500 238 C994.500 240 993 241.300 990.800 241.300 Z"/><path d="M983.600 239 C981.800 239 981 237.800 981.300 236.800 C981.600 235.700 982.800 235.200 984 235.800 L989 238.600 C990.300 239.200 991.700 238.600 991.800 237.500 C991.900 236.300 990.800 235.500 989.500 236" stroke-width="1.100"/></g>
<!-- appearance -->
<circle cx="986.400" cy="258.200" r="4.600"/><circle cx="986.400" cy="258.200" r="6.500" fill="none" stroke="#cdcdcd" stroke-width="1.100" stroke-dasharray="1.100 1.300"/>
<!-- graphic styles -->
<rect x="982.800" y="273.900" width="10.200" height="10.200" fill="none" stroke="#cdcdcd" stroke-width="1"/><rect x="979.800" y="280.200" width="6" height="6" fill="#343434" stroke="#cdcdcd" stroke-width="1"/><circle cx="982.300" cy="282" r="1.700" fill="#343434" stroke="#cdcdcd" stroke-width=".9"/>
<!-- transform -->
<rect x="981.600" y="307.200" width="9.600" height="9.600" fill="none" stroke="#cdcdcd" stroke-width="1" stroke-dasharray="1.500 1.200"/>
<path d="M980 305.600 h3 v3 h-3z M989.700 305.600 h3 v3 h-3z M980 315.400 h3 v3 h-3z M989.700 315.400 h3 v3 h-3z M985.600 311.200 h1.600 v1.600 h-1.600z"/>
<!-- pathfinder -->
<rect x="980.200" y="338" width="7.200" height="7.200" fill="#a8a8a8"/><rect x="985.200" y="343" width="7.400" height="7.400" fill="#cdcdcd"/><rect x="983.600" y="341.400" width="3.800" height="3.800" fill="#dcdcdc" stroke="#343434" stroke-width=".8"/>
<!-- export -->
<path d="M985.500 370.800 H980 V382.300 H991.800 V377" fill="none" stroke="#cdcdcd" stroke-width="1.400"/><path d="M985 377.300 L992.800 369.500 M988 369.300 H993.600 V375" fill="none" stroke="#cdcdcd" stroke-width="1.400"/>
</g>
</svg>
<div class="t" style="left:948.500px;top:227.500px;font-family:'Liberation Serif','DejaVu Serif',serif;font-style:italic;font-weight:bold;font-size:17.500px;color:#cdcdcd">A</div>
<div class="t" style="left:979.500px;top:397.500px;font-family:'Liberation Serif','DejaVu Serif',serif;font-style:italic;font-weight:bold;font-size:20.500px;color:#a4a4a4">O</div>
<div class="t" style="left:979.500px;top:432.500px;font-size:15.500px;font-weight:bold;color:#cdcdcd">A</div>
<div class="a" style="left:991.700px;top:433px;width:1px;height:14px;background:#cdcdcd"></div>
<div class="t" id="pilcrow" style="left:980.500px;top:454.500px;font-size:15px;font-weight:bold;color:#cdcdcd;transform:scaleX(1.25)">¶</div>
<!--DOCKS_E-->
</body>
</html>
